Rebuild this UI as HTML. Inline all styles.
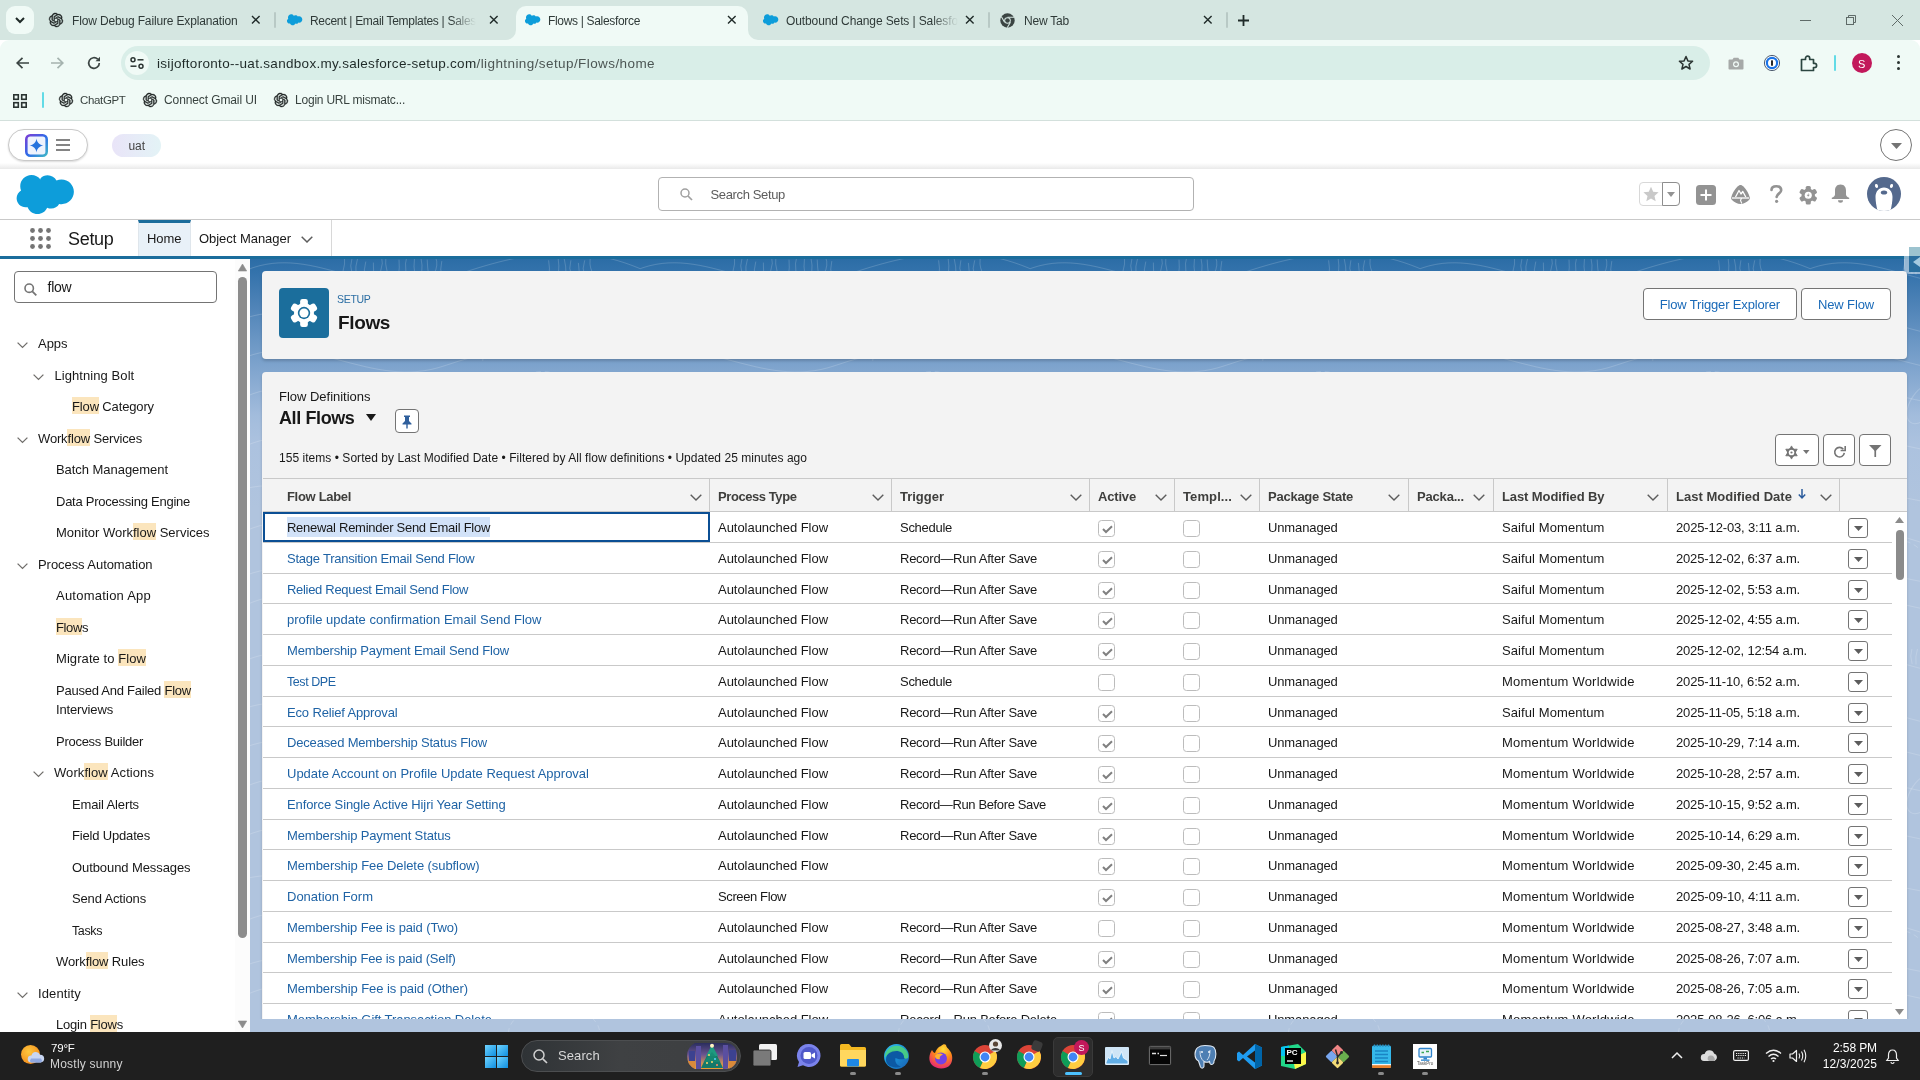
<!DOCTYPE html><html><head><meta charset="utf-8"><title>Flows | Salesforce</title><style>
*{box-sizing:border-box;margin:0;padding:0}
html,body{width:1920px;height:1080px;overflow:hidden;background:#fff}
#root{position:absolute;left:0;top:0;width:1920px;height:1080px;will-change:transform}
body{font-family:"Liberation Sans",sans-serif;font-size:13px;color:#181818;position:relative}
.abs{position:absolute}
.t{position:absolute;white-space:nowrap}
svg{position:absolute;overflow:visible}
#tabstrip{left:0;top:0;width:1920px;height:40px;background:#d5e6e1}
#toolbar{left:0;top:40px;width:1920px;height:80px;background:#f0faf6;border-radius:9px 9px 0 0}
#chromeline{left:0;top:120px;width:1920px;height:1px;background:#d3e0dc}
#urlpill{left:121px;top:46px;width:1589px;height:34px;border-radius:17px;background:#d9eee8}
#activetab{left:516px;top:6px;width:232px;height:34px;background:#f0faf6;border-radius:10px 10px 0 0}
#sfbar1{left:0;top:121px;width:1920px;height:48px;background:linear-gradient(#fff 0,#fff 42px,#ebebeb 47.500px,#fff 48px)}
#sfhdr{left:0;top:169px;width:1920px;height:51px;background:#fff;border-bottom:1px solid #c9c9c9}
#sfnav{left:0;top:220px;width:1920px;height:39px;background:#fff;border-bottom:3px solid #1b6d9c}
#side{left:0;top:259px;width:250px;height:773px;background:#fff}
#main{left:250px;top:259px;width:1670px;height:773px;background:linear-gradient(#2c6da6 0,#3473ac 14px,#4a80b5 41px,#6a96c4 81px,#82a6cf 113px,#a2bcdc 156px,#acc2df 185px,#b0c4de 250px)}
.card{background:#f3f3f3;border-radius:4px;box-shadow:0 2px 3px rgba(0,0,0,.18)}
#taskbar{left:0;top:1032px;width:1920px;height:48px;background:#1f1f1f}
.hl{background:#fbe5bd;padding-top:2px}
.btn{position:absolute;background:#fff;border:1px solid #747474;border-radius:4px}
.cb{position:absolute;width:17px;height:17px;background:#fff;border:1px solid #bcbcbc;border-radius:3.500px}
.rowbtn{position:absolute;width:20px;height:20px;background:#fff;border:1px solid #747474;border-radius:3px}
</style></head><body><div id="root">
<div class="abs" id="tabstrip"></div>
<div class="abs" id="toolbar"></div>
<div class="abs" id="activetab"></div>
<svg style="left:506px;top:30px;" width="10" height="10" viewBox="0 0 10 10"><path d="M10 0 V10 H0 A10 10 0 0 0 10 0Z" fill="#f0faf6"/></svg>
<svg style="left:748px;top:30px;" width="10" height="10" viewBox="0 0 10 10"><path d="M0 0 V10 H10 A10 10 0 0 1 0 0Z" fill="#f0faf6"/></svg>
<div class="abs" id="urlpill"></div>
<div class="abs" id="chromeline"></div>
<div class="abs" style="left:6px;top:6px;width:28px;height:28px;background:#f0faf6;border-radius:9px"></div>
<svg style="left:14px;top:16px;" width="12" height="8" viewBox="0 0 12 8"><path d="M2 2 L6 6 L10 2" fill="none" stroke="#1f2a28" stroke-width="2"/></svg>
<svg style="left:49px;top:13px;" width="14" height="14" viewBox="0 0 24 24"><path d="M22.2819 9.8211a5.9847 5.9847 0 0 0-.5157-4.9108 6.0462 6.0462 0 0 0-6.5098-2.9A6.0651 6.0651 0 0 0 4.9807 4.1818a5.9847 5.9847 0 0 0-3.9977 2.9 6.0462 6.0462 0 0 0 .7427 7.0966 5.98 5.98 0 0 0 .511 4.9107 6.051 6.051 0 0 0 6.5146 2.9001A5.9847 5.9847 0 0 0 13.2599 24a6.0557 6.0557 0 0 0 5.7718-4.2058 5.9894 5.9894 0 0 0 3.9977-2.9001 6.0557 6.0557 0 0 0-.7475-7.0729zm-9.022 12.6081a4.4755 4.4755 0 0 1-2.8764-1.0408l.1419-.0804 4.7783-2.7582a.7948.7948 0 0 0 .3927-.6813v-6.7369l2.02 1.1686a.071.071 0 0 1 .038.052v5.5826a4.504 4.504 0 0 1-4.4945 4.4944zm-9.6607-4.1254a4.4708 4.4708 0 0 1-.5346-3.0137l.142.0852 4.783 2.7582a.7712.7712 0 0 0 .7806 0l5.8428-3.3685v2.3324a.0804.0804 0 0 1-.0332.0615L9.74 19.9502a4.4992 4.4992 0 0 1-6.1408-1.6464zM2.3408 7.8956a4.485 4.485 0 0 1 2.3655-1.9728V11.6a.7664.7664 0 0 0 .3879.6765l5.8144 3.3543-2.0201 1.1685a.0757.0757 0 0 1-.071 0l-4.8303-2.7865A4.504 4.504 0 0 1 2.3408 7.872zm16.5963 3.8558L13.1038 8.364 15.1192 7.2a.0757.0757 0 0 1 .071 0l4.8303 2.7913a4.4944 4.4944 0 0 1-.6765 8.1042v-5.6772a.79.79 0 0 0-.407-.667zm2.0107-3.0231l-.142-.0852-4.7735-2.7818a.7759.7759 0 0 0-.7854 0L9.409 9.2297V6.8974a.0662.0662 0 0 1 .0284-.0615l4.8303-2.7866a4.4992 4.4992 0 0 1 6.6802 4.66zM8.3065 12.863l-2.02-1.1638a.0804.0804 0 0 1-.038-.0567V6.0742a4.4992 4.4992 0 0 1 7.3757-3.4537l-.142.0805L8.704 5.459a.7948.7948 0 0 0-.3927.6813zm1.0976-2.3654l2.602-1.4998 2.6069 1.4998v2.9994l-2.5974 1.4997-2.6067-1.4997Z" fill="#1d2322" stroke="#1d2322" stroke-width=".7"/></svg>
<div class="t" id="t1" style="top:14.0px;font-size:12px;line-height:14px;color:#2f3a38;left:72px;letter-spacing:-0.153px;">Flow Debug Failure Explanation</div>
<svg style="left:252.3px;top:16.1px;" width="7.6" height="7.6" viewBox="0 0 7.6 7.6"><path d="M0 0 L7.6 7.6 M7.6 0 L0 7.6" stroke="#1f2a28" stroke-width="1.4" fill="none"/></svg>
<div class="abs" style="left:273.7px;top:12px;width:2px;height:16px;background:#b8c9c5;border-radius:1px"></div>
<svg style="left:286px;top:14px;" width="16" height="11" viewBox="0 0 16 11"><path d="M6.7 1.6 C7.4 .8 8.4 .3 9.5 .3 c1.5 0 2.8 .8 3.5 2 .6-.3 1.2-.4 1.900-.4 2.600 0 4.700 2.100 4.700 4.700 s-2.100 4.700-4.700 4.700 c-.3 0-.6 0-.9-.1 -.6 1.100-1.800 1.800-3.100 1.800 -.6 0-1.100-.1-1.600-.4 C8.700 14.100 7.200 15.200 5.500 15.200 c-1.800 0-3.400-1.200-4-2.800 -.3.1-.5.1-.8.1 C-1.300 12.500-3 10.800-3 8.700 c0-1.400.8-2.700 1.900-3.300 -.2-.6-.4-1.200-.4-1.900 C-1.500 1 .6-1.100 3.200-1.100 c1.500 0 2.800.7 3.700 1.800z" transform="translate(3 1) scale(.68)" fill="#0d9dda"/></svg>
<div class="t" id="t2" style="top:14.0px;font-size:12px;line-height:14px;color:#2f3a38;left:310px;letter-spacing:-0.295px;-webkit-mask-image:linear-gradient(90deg,#000 85%,transparent);mask-image:linear-gradient(90deg,#000 85%,transparent);">Recent | Email Templates | Sales</div>
<svg style="left:490.3px;top:16.1px;" width="7.6" height="7.6" viewBox="0 0 7.6 7.6"><path d="M0 0 L7.6 7.6 M7.6 0 L0 7.6" stroke="#1f2a28" stroke-width="1.4" fill="none"/></svg>
<svg style="left:524px;top:14px;" width="16" height="11" viewBox="0 0 16 11"><path d="M6.7 1.6 C7.4 .8 8.4 .3 9.5 .3 c1.5 0 2.8 .8 3.5 2 .6-.3 1.2-.4 1.900-.4 2.600 0 4.700 2.100 4.700 4.700 s-2.100 4.700-4.700 4.700 c-.3 0-.6 0-.9-.1 -.6 1.100-1.800 1.800-3.100 1.800 -.6 0-1.100-.1-1.600-.4 C8.700 14.100 7.200 15.200 5.500 15.200 c-1.800 0-3.400-1.200-4-2.800 -.3.1-.5.1-.8.1 C-1.300 12.500-3 10.800-3 8.700 c0-1.400.8-2.700 1.900-3.300 -.2-.6-.4-1.200-.4-1.900 C-1.500 1 .6-1.100 3.200-1.100 c1.500 0 2.800.7 3.700 1.800z" transform="translate(3 1) scale(.68)" fill="#0d9dda"/></svg>
<div class="t" id="t3" style="top:14.0px;font-size:12px;line-height:14px;color:#2f3a38;left:548px;letter-spacing:-0.324px;">Flows | Salesforce</div>
<svg style="left:728.3px;top:16.1px;" width="7.6" height="7.6" viewBox="0 0 7.6 7.6"><path d="M0 0 L7.6 7.6 M7.6 0 L0 7.6" stroke="#1f2a28" stroke-width="1.4" fill="none"/></svg>
<svg style="left:762px;top:14px;" width="16" height="11" viewBox="0 0 16 11"><path d="M6.7 1.6 C7.4 .8 8.4 .3 9.5 .3 c1.5 0 2.8 .8 3.5 2 .6-.3 1.2-.4 1.900-.4 2.600 0 4.700 2.100 4.700 4.700 s-2.100 4.700-4.700 4.700 c-.3 0-.6 0-.9-.1 -.6 1.100-1.800 1.800-3.100 1.800 -.6 0-1.100-.1-1.600-.4 C8.700 14.100 7.200 15.200 5.500 15.200 c-1.800 0-3.400-1.200-4-2.800 -.3.1-.5.1-.8.1 C-1.300 12.500-3 10.800-3 8.700 c0-1.400.8-2.700 1.900-3.300 -.2-.6-.4-1.200-.4-1.900 C-1.500 1 .6-1.100 3.200-1.100 c1.500 0 2.800.7 3.700 1.800z" transform="translate(3 1) scale(.68)" fill="#0d9dda"/></svg>
<div class="t" id="t4" style="top:14.0px;font-size:12px;line-height:14px;color:#2f3a38;left:786px;letter-spacing:-0.108px;-webkit-mask-image:linear-gradient(90deg,#000 85%,transparent);mask-image:linear-gradient(90deg,#000 85%,transparent);">Outbound Change Sets | Salesfo</div>
<svg style="left:966.3px;top:16.1px;" width="7.6" height="7.6" viewBox="0 0 7.6 7.6"><path d="M0 0 L7.6 7.6 M7.6 0 L0 7.6" stroke="#1f2a28" stroke-width="1.4" fill="none"/></svg>
<div class="abs" style="left:987.5px;top:12px;width:2px;height:16px;background:#b8c9c5;border-radius:1px"></div>
<svg style="left:1000px;top:13px;" width="15" height="15" viewBox="0 0 15 15"><circle cx="7.5" cy="7.5" r="7.2" fill="#3b4543"/><circle cx="7.500" cy="7.500" r="3.300" fill="#d5e6e1"/><circle cx="7.500" cy="7.500" r="2.300" fill="#3b4543"/><path d="M7.500 4.200 H14 M4.600 9.200 L1.400 3.700 M10.400 9.200 L7.200 14.700" stroke="#d5e6e1" stroke-width="1.100"/></svg>
<div class="t" id="t5" style="top:14.0px;font-size:12px;line-height:14px;color:#2f3a38;left:1024px;letter-spacing:-0.212px;">New Tab</div>
<svg style="left:1204.3px;top:16.1px;" width="7.6" height="7.6" viewBox="0 0 7.6 7.6"><path d="M0 0 L7.6 7.6 M7.6 0 L0 7.6" stroke="#1f2a28" stroke-width="1.4" fill="none"/></svg>
<div class="abs" style="left:1225.9px;top:12px;width:2px;height:16px;background:#b8c9c5;border-radius:1px"></div>
<svg style="left:1238px;top:14.5px;" width="11" height="11" viewBox="0 0 11 11"><path d="M5.500 0 V11 M0 5.500 H11" stroke="#1f2a28" stroke-width="1.800"/></svg>
<svg style="left:1800px;top:19.5px;" width="11" height="1" viewBox="0 0 11 1"><rect width="11" height="1" fill="#5f6b68"/></svg>
<svg style="left:1846px;top:15px;" width="10" height="10" viewBox="0 0 10 10"><rect x=".5" y="2.500" width="7" height="7" fill="none" stroke="#5f6b68"/><path d="M2.500 2.500 V.5 H9.500 V7.500 H7.500" fill="none" stroke="#5f6b68"/></svg>
<svg style="left:1892px;top:14.5px;" width="11" height="11" viewBox="0 0 11 11"><path d="M0 0 L11 11 M11 0 L0 11" stroke="#5f6b68" stroke-width="1"/></svg>
<svg style="left:16px;top:57px;" width="13" height="12" viewBox="0 0 13 12"><path d="M6.500 .8 L1.200 6 L6.500 11.200 M1.200 6 H13" fill="none" stroke="#3b4543" stroke-width="1.700"/></svg>
<svg style="left:51px;top:57px;" width="13" height="12" viewBox="0 0 13 12"><path d="M6.500 .8 L11.800 6 L6.500 11.200 M11.800 6 H0" fill="none" stroke="#a5b3af" stroke-width="1.700"/></svg>
<svg style="left:87px;top:56px;" width="14" height="14" viewBox="0 0 14 14"><path d="M12.300 7 A5.300 5.300 0 1 1 10.700 3.200" fill="none" stroke="#3b4543" stroke-width="1.700"/><path d="M13 .8 V5.300 H8.500 Z" fill="#3b4543"/></svg>
<div class="abs" style="left:125px;top:51px;width:24px;height:24px;background:#f0faf6;border-radius:12px"></div>
<svg style="left:130px;top:57px;" width="14" height="12" viewBox="0 0 14 12"><circle cx="3" cy="2.800" r="2" fill="none" stroke="#2b3432" stroke-width="1.500"/><path d="M7.500 2.800 H13.500" stroke="#2b3432" stroke-width="1.500"/><circle cx="11" cy="9.200" r="2" fill="none" stroke="#2b3432" stroke-width="1.500"/><path d="M.5 9.200 H6.500" stroke="#2b3432" stroke-width="1.500"/></svg>
<div class="t" id="t6" style="top:56.0px;font-size:13.5px;line-height:15px;color:#1f2a28;left:157px;letter-spacing:0.302px;">isijoftoronto--uat.sandbox.my.salesforce-setup.com</div>
<div class="t" id="t7" style="top:56.0px;font-size:13.5px;line-height:15px;color:#4c5654;left:476.5px;letter-spacing:0.413px;">/lightning/setup/Flows/home</div>
<svg style="left:1678px;top:55px;" width="16" height="16" viewBox="0 0 16 16"><path d="M8 1.500 L9.900 5.900 L14.600 6.300 L11 9.400 L12.100 14 L8 11.500 L3.900 14 L5 9.400 L1.400 6.300 L6.100 5.900 Z" fill="none" stroke="#2b3432" stroke-width="1.500" stroke-linejoin="round"/></svg>
<svg style="left:1728px;top:57px;" width="16" height="13" viewBox="0 0 16 13"><path d="M1.500 2.500 H4.500 L5.700 .8 H10.300 L11.500 2.500 H14.500 Q15.500 2.500 15.500 3.500 V11.500 Q15.500 12.500 14.500 12.500 H1.500 Q.5 12.500 .5 11.500 V3.500 Q.5 2.500 1.500 2.500Z" fill="#a6a9a8"/><circle cx="8" cy="7.300" r="3" fill="#f0faf6"/><circle cx="8" cy="7.300" r="1.700" fill="#a6a9a8"/></svg>
<svg style="left:1764px;top:55px;" width="16" height="16" viewBox="0 0 16 16"><circle cx="8" cy="8" r="7.600" fill="#fff" stroke="#26344d" stroke-width=".8"/><circle cx="8" cy="8" r="6.200" fill="#1a73e8"/><circle cx="8" cy="8" r="4" fill="#fff"/><rect x="7.100" y="5.200" width="1.800" height="5.600" rx=".5" fill="#111"/></svg>
<svg style="left:1799px;top:54px;" width="18" height="18" viewBox="0 0 18 18"><path d="M2.500 5.500 H6.500 V4.300 a2.100 2.100 0 1 1 4.200 0 V5.500 H14.500 V9.300 H15.500 a2.100 2.100 0 1 1 0 4.200 H14.500 V16.500 H2.500 Z" fill="none" stroke="#2b4540" stroke-width="1.700" stroke-linejoin="round"/></svg>
<div class="abs" style="left:1834px;top:55px;width:2px;height:16px;background:#62dbe6;border-radius:1px"></div>
<div class="abs" style="left:1852px;top:53px;width:20px;height:20px;background:#c2185b;border-radius:10px"></div>
<div class="t" id="t8" style="top:55.7px;font-size:11px;line-height:16px;color:#fff;left:1858px;">S</div>
<svg style="left:1896.5px;top:55px;" width="3" height="15" viewBox="0 0 3 15"><circle cx="1.500" cy="1.500" r="1.500" fill="#2b3432"/><circle cx="1.500" cy="7.500" r="1.500" fill="#2b3432"/><circle cx="1.500" cy="13.500" r="1.500" fill="#2b3432"/></svg>
<svg style="left:13px;top:94px;" width="14" height="14" viewBox="0 0 14 14"><g fill="none" stroke="#2b3432" stroke-width="1.600"><rect x=".8" y=".8" width="4.500" height="4.500"/><rect x="8.700" y=".8" width="4.500" height="4.500"/><rect x=".8" y="8.700" width="4.500" height="4.500"/><rect x="8.700" y="8.700" width="4.500" height="4.500"/></g></svg>
<div class="abs" style="left:42px;top:92px;width:2px;height:16px;background:#62dbe6;border-radius:1px"></div>
<svg style="left:59px;top:93px;" width="14" height="14" viewBox="0 0 24 24"><path d="M22.2819 9.8211a5.9847 5.9847 0 0 0-.5157-4.9108 6.0462 6.0462 0 0 0-6.5098-2.9A6.0651 6.0651 0 0 0 4.9807 4.1818a5.9847 5.9847 0 0 0-3.9977 2.9 6.0462 6.0462 0 0 0 .7427 7.0966 5.98 5.98 0 0 0 .511 4.9107 6.051 6.051 0 0 0 6.5146 2.9001A5.9847 5.9847 0 0 0 13.2599 24a6.0557 6.0557 0 0 0 5.7718-4.2058 5.9894 5.9894 0 0 0 3.9977-2.9001 6.0557 6.0557 0 0 0-.7475-7.0729zm-9.022 12.6081a4.4755 4.4755 0 0 1-2.8764-1.0408l.1419-.0804 4.7783-2.7582a.7948.7948 0 0 0 .3927-.6813v-6.7369l2.02 1.1686a.071.071 0 0 1 .038.052v5.5826a4.504 4.504 0 0 1-4.4945 4.4944zm-9.6607-4.1254a4.4708 4.4708 0 0 1-.5346-3.0137l.142.0852 4.783 2.7582a.7712.7712 0 0 0 .7806 0l5.8428-3.3685v2.3324a.0804.0804 0 0 1-.0332.0615L9.74 19.9502a4.4992 4.4992 0 0 1-6.1408-1.6464zM2.3408 7.8956a4.485 4.485 0 0 1 2.3655-1.9728V11.6a.7664.7664 0 0 0 .3879.6765l5.8144 3.3543-2.0201 1.1685a.0757.0757 0 0 1-.071 0l-4.8303-2.7865A4.504 4.504 0 0 1 2.3408 7.872zm16.5963 3.8558L13.1038 8.364 15.1192 7.2a.0757.0757 0 0 1 .071 0l4.8303 2.7913a4.4944 4.4944 0 0 1-.6765 8.1042v-5.6772a.79.79 0 0 0-.407-.667zm2.0107-3.0231l-.142-.0852-4.7735-2.7818a.7759.7759 0 0 0-.7854 0L9.409 9.2297V6.8974a.0662.0662 0 0 1 .0284-.0615l4.8303-2.7866a4.4992 4.4992 0 0 1 6.6802 4.66zM8.3065 12.863l-2.02-1.1638a.0804.0804 0 0 1-.038-.0567V6.0742a4.4992 4.4992 0 0 1 7.3757-3.4537l-.142.0805L8.704 5.459a.7948.7948 0 0 0-.3927.6813zm1.0976-2.3654l2.602-1.4998 2.6069 1.4998v2.9994l-2.5974 1.4997-2.6067-1.4997Z" fill="#1d2322" stroke="#1d2322" stroke-width=".7"/></svg>
<div class="t" id="t9" style="top:94.0px;font-size:11.5px;line-height:12px;color:#38423f;left:80px;letter-spacing:-0.348px;">ChatGPT</div>
<svg style="left:143px;top:93px;" width="14" height="14" viewBox="0 0 24 24"><path d="M22.2819 9.8211a5.9847 5.9847 0 0 0-.5157-4.9108 6.0462 6.0462 0 0 0-6.5098-2.9A6.0651 6.0651 0 0 0 4.9807 4.1818a5.9847 5.9847 0 0 0-3.9977 2.9 6.0462 6.0462 0 0 0 .7427 7.0966 5.98 5.98 0 0 0 .511 4.9107 6.051 6.051 0 0 0 6.5146 2.9001A5.9847 5.9847 0 0 0 13.2599 24a6.0557 6.0557 0 0 0 5.7718-4.2058 5.9894 5.9894 0 0 0 3.9977-2.9001 6.0557 6.0557 0 0 0-.7475-7.0729zm-9.022 12.6081a4.4755 4.4755 0 0 1-2.8764-1.0408l.1419-.0804 4.7783-2.7582a.7948.7948 0 0 0 .3927-.6813v-6.7369l2.02 1.1686a.071.071 0 0 1 .038.052v5.5826a4.504 4.504 0 0 1-4.4945 4.4944zm-9.6607-4.1254a4.4708 4.4708 0 0 1-.5346-3.0137l.142.0852 4.783 2.7582a.7712.7712 0 0 0 .7806 0l5.8428-3.3685v2.3324a.0804.0804 0 0 1-.0332.0615L9.74 19.9502a4.4992 4.4992 0 0 1-6.1408-1.6464zM2.3408 7.8956a4.485 4.485 0 0 1 2.3655-1.9728V11.6a.7664.7664 0 0 0 .3879.6765l5.8144 3.3543-2.0201 1.1685a.0757.0757 0 0 1-.071 0l-4.8303-2.7865A4.504 4.504 0 0 1 2.3408 7.872zm16.5963 3.8558L13.1038 8.364 15.1192 7.2a.0757.0757 0 0 1 .071 0l4.8303 2.7913a4.4944 4.4944 0 0 1-.6765 8.1042v-5.6772a.79.79 0 0 0-.407-.667zm2.0107-3.0231l-.142-.0852-4.7735-2.7818a.7759.7759 0 0 0-.7854 0L9.409 9.2297V6.8974a.0662.0662 0 0 1 .0284-.0615l4.8303-2.7866a4.4992 4.4992 0 0 1 6.6802 4.66zM8.3065 12.863l-2.02-1.1638a.0804.0804 0 0 1-.038-.0567V6.0742a4.4992 4.4992 0 0 1 7.3757-3.4537l-.142.0805L8.704 5.459a.7948.7948 0 0 0-.3927.6813zm1.0976-2.3654l2.602-1.4998 2.6069 1.4998v2.9994l-2.5974 1.4997-2.6067-1.4997Z" fill="#1d2322" stroke="#1d2322" stroke-width=".7"/></svg>
<div class="t" id="t10" style="top:93.0px;font-size:12px;line-height:14px;color:#38423f;left:164px;letter-spacing:-0.106px;">Connect Gmail UI</div>
<svg style="left:274px;top:93px;" width="14" height="14" viewBox="0 0 24 24"><path d="M22.2819 9.8211a5.9847 5.9847 0 0 0-.5157-4.9108 6.0462 6.0462 0 0 0-6.5098-2.9A6.0651 6.0651 0 0 0 4.9807 4.1818a5.9847 5.9847 0 0 0-3.9977 2.9 6.0462 6.0462 0 0 0 .7427 7.0966 5.98 5.98 0 0 0 .511 4.9107 6.051 6.051 0 0 0 6.5146 2.9001A5.9847 5.9847 0 0 0 13.2599 24a6.0557 6.0557 0 0 0 5.7718-4.2058 5.9894 5.9894 0 0 0 3.9977-2.9001 6.0557 6.0557 0 0 0-.7475-7.0729zm-9.022 12.6081a4.4755 4.4755 0 0 1-2.8764-1.0408l.1419-.0804 4.7783-2.7582a.7948.7948 0 0 0 .3927-.6813v-6.7369l2.02 1.1686a.071.071 0 0 1 .038.052v5.5826a4.504 4.504 0 0 1-4.4945 4.4944zm-9.6607-4.1254a4.4708 4.4708 0 0 1-.5346-3.0137l.142.0852 4.783 2.7582a.7712.7712 0 0 0 .7806 0l5.8428-3.3685v2.3324a.0804.0804 0 0 1-.0332.0615L9.74 19.9502a4.4992 4.4992 0 0 1-6.1408-1.6464zM2.3408 7.8956a4.485 4.485 0 0 1 2.3655-1.9728V11.6a.7664.7664 0 0 0 .3879.6765l5.8144 3.3543-2.0201 1.1685a.0757.0757 0 0 1-.071 0l-4.8303-2.7865A4.504 4.504 0 0 1 2.3408 7.872zm16.5963 3.8558L13.1038 8.364 15.1192 7.2a.0757.0757 0 0 1 .071 0l4.8303 2.7913a4.4944 4.4944 0 0 1-.6765 8.1042v-5.6772a.79.79 0 0 0-.407-.667zm2.0107-3.0231l-.142-.0852-4.7735-2.7818a.7759.7759 0 0 0-.7854 0L9.409 9.2297V6.8974a.0662.0662 0 0 1 .0284-.0615l4.8303-2.7866a4.4992 4.4992 0 0 1 6.6802 4.66zM8.3065 12.863l-2.02-1.1638a.0804.0804 0 0 1-.038-.0567V6.0742a4.4992 4.4992 0 0 1 7.3757-3.4537l-.142.0805L8.704 5.459a.7948.7948 0 0 0-.3927.6813zm1.0976-2.3654l2.602-1.4998 2.6069 1.4998v2.9994l-2.5974 1.4997-2.6067-1.4997Z" fill="#1d2322" stroke="#1d2322" stroke-width=".7"/></svg>
<div class="t" id="t11" style="top:93.0px;font-size:12px;line-height:14px;color:#38423f;left:295px;letter-spacing:-0.213px;">Login URL mismatc...</div>
<div class="abs" id="sfhdr"></div>
<div class="abs" id="sfbar1"></div>
<div class="abs" id="sfnav"></div>
<div class="abs" style="left:8px;top:129px;width:80px;height:32px;background:#fff;border:1px solid #c9c9c9;border-radius:16px;box-shadow:0 1px 2px rgba(0,0,0,.15)"></div>
<svg style="left:25px;top:133.5px;" width="23" height="23" viewBox="0 0 23 23"><defs><linearGradient id="ag" x1="0" y1="0" x2="1" y2="1"><stop offset="0" stop-color="#7a3fd6"/><stop offset=".5" stop-color="#2f6be8"/><stop offset="1" stop-color="#3fb5c8"/></linearGradient></defs><rect x="1.300" y="1.300" width="20.400" height="20.400" rx="4" fill="#eef3fd" stroke="url(#ag)" stroke-width="2.600"/><path d="M11.500 4.500 C12 8.500 14.500 11 18.500 11.500 C14.500 12 12 14.500 11.500 18.500 C11 14.500 8.500 12 4.500 11.500 C8.500 11 11 8.500 11.500 4.500Z" fill="#2673dd"/></svg>
<svg style="left:56px;top:139px;" width="14" height="12" viewBox="0 0 14 12"><path d="M0 1 H14 M0 6 H14 M0 11 H14" stroke="#5c5c5c" stroke-width="1.700"/></svg>
<div class="abs" style="left:112px;top:134px;width:49px;height:23px;background:linear-gradient(90deg,#e9e4f8,#e3f3f6);border-radius:11.500px"></div>
<div class="t" id="t12" style="top:139.0px;font-size:12px;line-height:14px;color:#444;left:128.5px;letter-spacing:-0.062px;">uat</div>
<div class="abs" style="left:1880px;top:129px;width:32px;height:32px;border:1px solid #747474;border-radius:16px;background:#fff"></div>
<svg style="left:1890.5px;top:142.5px;" width="11" height="6" viewBox="0 0 11 6"><path d="M0 0 H11 L5.500 6Z" fill="#747474"/></svg>
<svg style="left:15.5px;top:173.5px;" width="58.5" height="41.2" viewBox="0 0 57 41"><path d="M23.700 4.400 c1.800-1.900 4.400-3.100 7.200-3.100 3.800 0 7 2.100 8.800 5.200 1.500-.7 3.200-1.100 5-1.100 6.800 0 12.300 5.500 12.300 12.300 S51.500 30 44.700 30 c-.8 0-1.600-.1-2.400-.2 -1.500 2.800-4.500 4.600-7.900 4.600 -1.400 0-2.800-.3-4-.9 -1.600 3.700-5.300 6.300-9.600 6.300 -4.500 0-8.300-2.800-9.800-6.800 -.6.100-1.300.2-2 .2 C4 33.200 0 29.200 0 24.200 c0-3.300 1.800-6.200 4.400-7.800 -.5-1.300-.8-2.700-.8-4.200 C3.600 6.100 8.600 1.100 14.700 1.100 c3.700 0 6.900 1.700 9 4.300z" fill="#0d9dda"/></svg>
<div class="abs" style="left:658px;top:177px;width:536px;height:34px;background:#fff;border:1px solid #b2b2b2;border-radius:4px"></div>
<svg style="left:679.5px;top:187.5px;" width="13" height="13" viewBox="0 0 13 13"><circle cx="5" cy="5" r="4" fill="none" stroke="#a0a0a0" stroke-width="1.500"/><path d="M8 8 L12 12" stroke="#a0a0a0" stroke-width="1.700"/></svg>
<div class="t" id="t13" style="top:187.0px;font-size:13.0px;line-height:15px;color:#5c5c5c;left:710.5px;letter-spacing:-0.357px;">Search Setup</div>
<div class="abs" style="left:1639px;top:182px;width:41px;height:24px;background:#fff;border:1px solid #d8d8d8;border-radius:4px"></div>
<div class="abs" style="left:1662px;top:182px;width:18px;height:24px;background:#fff;border:1px solid #8e8e8e;border-radius:0 4px 4px 0"></div>
<svg style="left:1643px;top:186px;" width="16" height="16" viewBox="0 0 16 16"><path d="M8 .8 L10.200 5.800 L15.600 6.300 L11.500 9.900 L12.700 15.200 L8 12.400 L3.300 15.200 L4.500 9.900 L.4 6.300 L5.800 5.800 Z" fill="#c9c9c9"/></svg>
<svg style="left:1667px;top:192px;" width="8" height="5" viewBox="0 0 8 5"><path d="M0 0 H8 L4 5Z" fill="#939393"/></svg>
<svg style="left:1696px;top:185px;" width="20" height="20" viewBox="0 0 20 20"><rect width="20" height="20" rx="3.500" fill="#939393"/><path d="M10 4.500 V15.500 M4.500 10 H15.500" stroke="#fff" stroke-width="2"/></svg>
<svg style="left:1731px;top:185px;" width="19" height="19" viewBox="0 0 19 19"><path d="M9.500 0 C10.500 0 11.500 .6 12.500 1.600 C15.500 4.500 18 9 18.800 12.500 C19 13.500 18.700 14.300 18 15 C16 17 12.500 19 9.500 19 C6.500 19 3 17 1 15 C.3 14.300 0 13.500 .2 12.500 C1 9 3.500 4.500 6.500 1.600 C7.500 .6 8.500 0 9.500 0Z" fill="#939393"/><path d="M4.500 12 L8 5.500 L10 9 L11.800 6.500 L14.800 12" fill="none" stroke="#fff" stroke-width="1.300" stroke-linejoin="round"/><path d="M1 13 H18" stroke="#fff" stroke-width="1.300"/><path d="M10.500 13 L9.500 15.500 L10.800 18.500" stroke="#fff" stroke-width="1.100" fill="none"/></svg>
<svg style="left:1769.5px;top:185px;" width="13" height="18" viewBox="0 0 13 18"><path d="M1.500 5 C1.500 2.500 3.500 1.200 6.300 1.200 C9.200 1.200 11.200 2.800 11.200 5.200 C11.200 8.200 7 8.500 6.600 12" fill="none" stroke="#939393" stroke-width="2.600" stroke-linecap="round"/><circle cx="6.600" cy="16.300" r="1.600" fill="#939393"/></svg>
<svg style="left:1798.5px;top:185.5px;" width="18.5" height="18.5" viewBox="0 0 24 24"><g transform="translate(12 12)"><rect x="-3.300" y="-12" width="6.600" height="7" rx="2" fill="#939393" transform="rotate(0)"/><rect x="-3.300" y="-12" width="6.600" height="7" rx="2" fill="#939393" transform="rotate(60)"/><rect x="-3.300" y="-12" width="6.600" height="7" rx="2" fill="#939393" transform="rotate(120)"/><rect x="-3.300" y="-12" width="6.600" height="7" rx="2" fill="#939393" transform="rotate(180)"/><rect x="-3.300" y="-12" width="6.600" height="7" rx="2" fill="#939393" transform="rotate(240)"/><rect x="-3.300" y="-12" width="6.600" height="7" rx="2" fill="#939393" transform="rotate(300)"/><circle r="8.600" fill="#939393"/><circle r="4.6" fill="#fff"/><path d="M1.200 -3.200 L-2 .8 H0 L-1.200 3.200 L2 -.8 H0Z" fill="#939393"/></g></svg>
<svg style="left:1830.5px;top:183.8px;" width="19" height="19.5" viewBox="0 0 19 19.5"><path d="M9.500 .5 C5.500 .5 4 3.500 4 6.500 V10.500 C4 12 2.500 13 .8 13.800 V15 H18.200 V13.800 C16.500 13 15 12 15 10.500 V6.500 C15 3.500 13.500 .5 9.500 .5Z" fill="#939393"/><path d="M7 16.300 a2.500 2.500 0 0 0 5 0Z" fill="#939393"/></svg>
<svg style="left:1867px;top:177px;" width="34" height="34" viewBox="0 0 34 34"><defs><clipPath id="avc"><circle cx="17" cy="17" r="17"/></clipPath></defs><circle cx="17" cy="17" r="17" fill="#54698d"/><g clip-path="url(#avc)"><ellipse cx="9.500" cy="9" rx="1.500" ry="2" fill="#fff" transform="rotate(-20 9.500 9)"/><ellipse cx="24.500" cy="9" rx="1.500" ry="2" fill="#fff" transform="rotate(20 24.500 9)"/><path d="M17 10.500 C22 10.500 25.500 14.500 25.500 20 C25.500 25 24.500 29 23.500 34 H10.500 C9.500 29 8.500 25 8.500 20 C8.500 14.500 12 10.500 17 10.500Z" fill="#fff"/><ellipse cx="17" cy="15.500" rx="3.200" ry="2.100" fill="#54698d"/></g></svg>
<svg style="left:30px;top:227.5px;" width="21" height="21" viewBox="0 0 21 21"><circle cx="2.5" cy="2.5" r="2.400" fill="#747474"/><circle cx="10.5" cy="2.5" r="2.400" fill="#747474"/><circle cx="18.5" cy="2.5" r="2.400" fill="#747474"/><circle cx="2.5" cy="10.5" r="2.400" fill="#747474"/><circle cx="10.5" cy="10.5" r="2.400" fill="#747474"/><circle cx="18.5" cy="10.5" r="2.400" fill="#747474"/><circle cx="2.5" cy="18.5" r="2.400" fill="#747474"/><circle cx="10.5" cy="18.5" r="2.400" fill="#747474"/><circle cx="18.5" cy="18.5" r="2.400" fill="#747474"/></svg>
<div class="t" id="t14" style="top:229.0px;font-size:18px;line-height:20px;color:#181818;left:68px;letter-spacing:-0.309px;">Setup</div>
<div class="abs" style="left:138px;top:220px;width:53px;height:36px;background:#e8f1f8;border-top:3px solid #1b6d9c;border-left:1px solid #dfe6ec;border-right:1px solid #dfe6ec"></div>
<div class="abs" style="left:331px;top:220px;width:1px;height:36px;background:#d8d8d8"></div>
<div class="t" id="t15" style="top:231.0px;font-size:13px;line-height:15px;color:#181818;left:147px;letter-spacing:-0.047px;">Home</div>
<div class="t" id="t16" style="top:231.0px;font-size:13px;line-height:15px;color:#181818;left:199px;letter-spacing:-0.036px;">Object Manager</div>
<svg style="left:301px;top:235.5px;" width="12" height="7" viewBox="0 0 12 7"><path d="M.7 .7 L6 6 L11.300 .7" fill="none" stroke="#5c5c5c" stroke-width="1.500"/></svg>
<div class="abs" id="side"></div>
<div class="abs" id="main"></div>
<svg style="left:250px;top:259px" width="1670" height="773" viewBox="0 0 1670 773"><defs><pattern id="topo" width="390" height="390" patternUnits="userSpaceOnUse"><g fill="none" stroke="#fff" stroke-opacity=".17" stroke-width="1"><path d="M94.5 -2.8 q0.9 8 -1.7 16" /><path d="M102.1 -1.1 q-2.7 8 0.0 16" /><path d="M107.6 -0.5 q-2.6 8 -1.6 16" /><path d="M115.8 2.6 q-2.3 8 -1.1 16" /><path d="M123.4 3.6 q0.5 8 -0.4 16" /><path d="M131.4 -3.6 q2.2 8 -0.8 16" /><path d="M135.9 -3.1 q-1.1 8 1.3 16" /><path d="M149.0 0.7 q0.8 8 -0.5 16" /><path d="M157.1 -3.5 q-2.6 8 -1.2 16" /><path d="M164.5 -0.6 q-1.1 8 0.3 16" /><path d="M170.9 -1.6 q1.8 8 0.8 16" /><path d="M177.2 0.6 q0.2 8 1.5 16" /><path d="M185.7 -1.7 q2.9 8 -1.5 16" /><path d="M191.8 2.1 q-2.1 8 -0.0 16" /><path d="M298.6 1.3 q1.6 8 0.3 16" /><path d="M308.1 -1.5 q1.2 8 0.4 16" /><path d="M314.2 -0.4 q2.0 8 1.8 16" /><path d="M320.9 1.3 q-2.6 8 0.8 16" /><path d="M328.4 3.9 q1.9 8 -0.9 16" /><path d="M334.7 1.3 q-2.9 8 -0.2 16" /><path d="M341.0 -3.1 q-2.6 8 1.1 16" /><path d="M-10 14.1 C60 -21.0 120 46.9 195 20.0 S330 -19.3 400 14.1"/><path d="M-10 61.2 C60 32.2 120 103.9 195 66.3 S330 43.5 400 61.2"/><path d="M-10 100.5 C60 68.8 120 132.6 195 106.6 S330 84.6 400 100.5"/><path d="M-10 140.4 C60 103.9 120 170.1 195 136.1 S330 115.1 400 140.4"/><path d="M-10 189.4 C60 154.7 120 214.5 195 188.1 S330 161.8 400 189.4"/><path d="M-10 231.1 C60 210.1 120 269.9 195 231.3 S330 208.4 400 231.1"/><path d="M-10 274.8 C60 235.9 120 317.8 195 279.3 S330 257.3 400 274.8"/><path d="M-10 318.8 C60 286.6 120 351.7 195 312.4 S330 296.5 400 318.8"/><path d="M-10 349.0 C60 310.3 120 378.2 195 343.6 S330 320.8 400 349.0"/><ellipse cx="47.3" cy="30.1" rx="17.6" ry="9.5" transform="rotate(93 47.3 30.1)"/><ellipse cx="232.5" cy="53.2" rx="19.0" ry="12.4" transform="rotate(162 232.5 53.2)"/><ellipse cx="113.2" cy="144.6" rx="22.7" ry="12.5" transform="rotate(124 113.2 144.6)"/><ellipse cx="357.7" cy="183.8" rx="25.6" ry="13.7" transform="rotate(26 357.7 183.8)"/><ellipse cx="277.4" cy="274.3" rx="25.5" ry="19.8" transform="rotate(132 277.4 274.3)"/><ellipse cx="37.6" cy="343.8" rx="26.7" ry="14.9" transform="rotate(139 37.6 343.8)"/><ellipse cx="331.7" cy="280.2" rx="21.2" ry="16.0" transform="rotate(23 331.7 280.2)"/><path d="M232.7 101.8 a31.0 18.6 0 0 1 62.0 0" stroke-dasharray="5 4"/><path d="M42.5 301.1 a36.0 21.6 0 0 1 72.0 0" stroke-dasharray="5 4"/><path d="M266.0 128.6 a26.7 16.0 0 0 1 53.4 0" stroke-dasharray="5 4"/><path d="M258.5 384.1 a45.6 27.3 0 0 1 91.2 0" stroke-dasharray="5 4"/><path d="M259.9 319.1 a42.2 25.3 0 0 1 84.4 0" stroke-dasharray="5 4"/></g></pattern></defs><rect width="1670" height="773" fill="url(#topo)"/></svg>
<div class="abs" style="left:14px;top:271px;width:203px;height:32px;background:#fff;border:1px solid #747474;border-radius:4px"></div>
<svg style="left:24px;top:283px;" width="13" height="13" viewBox="0 0 13 13"><circle cx="5.200" cy="5.200" r="4.200" fill="none" stroke="#747474" stroke-width="1.600"/><path d="M8.300 8.300 L12.300 12.300" stroke="#747474" stroke-width="1.800"/></svg>
<div class="t" id="t17" style="top:279.0px;font-size:14px;line-height:16px;color:#181818;left:47.5px;letter-spacing:-0.227px;">flow</div>
<div class="abs" style="left:235px;top:259px;width:15px;height:773px;background:#fcfcfc"></div>
<svg style="left:238px;top:264px;" width="9" height="7" viewBox="0 0 9 7"><path d="M.3 7 H8.700 L4.500 0Z" fill="#8c8c8c" stroke="#8c8c8c" stroke-width=".6" stroke-linejoin="round"/></svg>
<div class="abs" style="left:238px;top:277px;width:9px;height:661px;background:#8c8c8c;border-radius:4.500px"></div>
<svg style="left:238px;top:1021px;" width="9" height="7" viewBox="0 0 9 7"><path d="M.3 0 H8.700 L4.500 7Z" fill="#8c8c8c" stroke="#8c8c8c" stroke-width=".6" stroke-linejoin="round"/></svg>
<svg style="left:16.9px;top:341.5px;" width="11" height="6" viewBox="0 0 11 6"><path d="M.6 .6 L5.500 5.400 L10.400 .6" fill="none" stroke="#706e6b" stroke-width="1.300"/></svg>
<div class="t" id="t18" style="top:336.0px;font-size:13px;line-height:15px;color:#181818;left:38px;letter-spacing:-0.035px;">Apps</div>
<svg style="left:32.9px;top:373.5px;" width="11" height="6" viewBox="0 0 11 6"><path d="M.6 .6 L5.500 5.400 L10.400 .6" fill="none" stroke="#706e6b" stroke-width="1.300"/></svg>
<div class="t" id="t19" style="top:368.0px;font-size:13px;line-height:15px;color:#181818;left:54.5px;letter-spacing:0.073px;">Lightning Bolt</div>
<div class="t" id="t20" style="top:399.0px;font-size:13px;line-height:15px;color:#181818;left:72px;letter-spacing:-0.141px;"><span class="hl">Flow</span> Category</div>
<svg style="left:16.9px;top:436.5px;" width="11" height="6" viewBox="0 0 11 6"><path d="M.6 .6 L5.500 5.400 L10.400 .6" fill="none" stroke="#706e6b" stroke-width="1.300"/></svg>
<div class="t" id="t21" style="top:431.0px;font-size:13px;line-height:15px;color:#181818;left:38px;letter-spacing:-0.159px;">Work<span class="hl">flow</span> Services</div>
<div class="t" id="t22" style="top:462.0px;font-size:13px;line-height:15px;color:#181818;left:56px;letter-spacing:-0.046px;">Batch Management</div>
<div class="t" id="t23" style="top:494.0px;font-size:13px;line-height:15px;color:#181818;left:56px;letter-spacing:-0.249px;">Data Processing Engine</div>
<div class="t" id="t24" style="top:525.0px;font-size:13px;line-height:15px;color:#181818;left:56px;letter-spacing:-0.006px;">Monitor Work<span class="hl">flow</span> Services</div>
<svg style="left:16.9px;top:562.5px;" width="11" height="6" viewBox="0 0 11 6"><path d="M.6 .6 L5.500 5.400 L10.400 .6" fill="none" stroke="#706e6b" stroke-width="1.300"/></svg>
<div class="t" id="t25" style="top:557.0px;font-size:13px;line-height:15px;color:#181818;left:38px;letter-spacing:-0.062px;">Process Automation</div>
<div class="t" id="t26" style="top:588.0px;font-size:13px;line-height:15px;color:#181818;left:56px;letter-spacing:0.229px;">Automation App</div>
<div class="t" id="t27" style="top:620.0px;font-size:13.0px;line-height:15px;color:#181818;left:56px;letter-spacing:-0.391px;"><span class="hl">Flow</span>s</div>
<div class="t" id="t28" style="top:651.0px;font-size:13px;line-height:15px;color:#181818;left:56px;letter-spacing:0.075px;">Migrate to <span class="hl">Flow</span></div>
<div class="t" id="t29" style="top:683.0px;font-size:13px;line-height:15px;color:#181818;left:56px;letter-spacing:-0.237px;">Paused And Failed <span class="hl">Flow</span></div>
<div class="t" id="t30" style="top:702.0px;font-size:13px;line-height:15px;color:#181818;left:56px;letter-spacing:-0.153px;">Interviews</div>
<div class="t" id="t31" style="top:734.0px;font-size:13px;line-height:15px;color:#181818;left:56px;letter-spacing:-0.270px;">Process Builder</div>
<svg style="left:32.9px;top:770.5px;" width="11" height="6" viewBox="0 0 11 6"><path d="M.6 .6 L5.500 5.400 L10.400 .6" fill="none" stroke="#706e6b" stroke-width="1.300"/></svg>
<div class="t" id="t32" style="top:765.0px;font-size:13px;line-height:15px;color:#181818;left:54px;letter-spacing:0.077px;">Work<span class="hl">flow</span> Actions</div>
<div class="t" id="t33" style="top:797.0px;font-size:13px;line-height:15px;color:#181818;left:72px;letter-spacing:-0.137px;">Email Alerts</div>
<div class="t" id="t34" style="top:828.0px;font-size:13px;line-height:15px;color:#181818;left:72px;letter-spacing:-0.171px;">Field Updates</div>
<div class="t" id="t35" style="top:860.0px;font-size:13px;line-height:15px;color:#181818;left:72px;letter-spacing:-0.086px;">Outbound Messages</div>
<div class="t" id="t36" style="top:891.0px;font-size:13px;line-height:15px;color:#181818;left:72px;letter-spacing:-0.158px;">Send Actions</div>
<div class="t" id="t37" style="top:924.0px;font-size:12.5px;line-height:14px;color:#181818;left:72px;letter-spacing:-0.391px;">Tasks</div>
<div class="t" id="t38" style="top:954.0px;font-size:13px;line-height:15px;color:#181818;left:56px;letter-spacing:-0.114px;">Work<span class="hl">flow</span> Rules</div>
<svg style="left:16.9px;top:991.5px;" width="11" height="6" viewBox="0 0 11 6"><path d="M.6 .6 L5.500 5.400 L10.400 .6" fill="none" stroke="#706e6b" stroke-width="1.300"/></svg>
<div class="t" id="t39" style="top:986.0px;font-size:13px;line-height:15px;color:#181818;left:38px;letter-spacing:0.135px;">Identity</div>
<div class="t" id="t40" style="top:1017.0px;font-size:13px;line-height:15px;color:#181818;left:56px;letter-spacing:-0.216px;">Login <span class="hl">Flow</span>s</div>
<div class="abs" style="left:1904px;top:256px;width:16px;height:18px;background:rgba(255,255,255,.5);border-radius:0 0 0 5px"></div>
<div class="abs" style="left:1909px;top:247px;width:11px;height:9px;background:#9cc3cf"></div>
<div class="abs" style="left:1909px;top:256px;width:11px;height:15.5px;background:#2a6f9f"></div>
<svg style="left:1913px;top:256.5px;" width="7" height="10" viewBox="0 0 7 10"><path d="M7 0 V10 L0 5Z" fill="#a4cadf"/></svg>
<div class="abs card" style="left:262px;top:271px;width:1645px;height:88px"></div>
<div class="abs" style="left:279px;top:288px;width:50px;height:50px;background:#1b6e9c;border-radius:4px"></div>
<svg style="left:290px;top:299px;" width="28" height="28" viewBox="0 0 24 24"><g transform="translate(12 12)"><rect x="-3.300" y="-12" width="6.600" height="7" rx="2" fill="#fff" transform="rotate(0)"/><rect x="-3.300" y="-12" width="6.600" height="7" rx="2" fill="#fff" transform="rotate(60)"/><rect x="-3.300" y="-12" width="6.600" height="7" rx="2" fill="#fff" transform="rotate(120)"/><rect x="-3.300" y="-12" width="6.600" height="7" rx="2" fill="#fff" transform="rotate(180)"/><rect x="-3.300" y="-12" width="6.600" height="7" rx="2" fill="#fff" transform="rotate(240)"/><rect x="-3.300" y="-12" width="6.600" height="7" rx="2" fill="#fff" transform="rotate(300)"/><circle r="8.600" fill="#fff"/><circle r="5.3" fill="#1b6e9c"/><circle r="3.9" fill="#fff"/></g></svg>
<div class="t" id="t41" style="top:293.0px;font-size:10.5px;line-height:12px;color:#2a6da3;left:337px;letter-spacing:-0.303px;">SETUP</div>
<div class="t" id="t42" style="top:312.0px;font-size:19.0px;line-height:21px;color:#181818;left:338px;font-weight:700;letter-spacing:-0.369px;">Flows</div>
<div class="btn" style="left:1643px;top:288px;width:154px;height:32px"></div>
<div class="btn" style="left:1801px;top:288px;width:90px;height:32px"></div>
<div class="t" id="t43" style="top:297.0px;font-size:13px;line-height:15px;color:#1a6ab8;left:1659.7px;letter-spacing:-0.155px;">Flow Trigger Explorer</div>
<div class="t" id="t44" style="top:297.0px;font-size:13px;line-height:15px;color:#1a6ab8;left:1818px;letter-spacing:-0.135px;">New Flow</div>
<div class="abs card" style="left:262px;top:372px;width:1645px;height:647px;border-radius:4px 4px 0 0;clip-path:inset(-6px -6px 0 -6px)"></div>
<div class="t" id="t45" style="top:389.0px;font-size:13px;line-height:15px;color:#181818;left:279px;letter-spacing:-0.017px;">Flow Definitions</div>
<div class="t" id="t46" style="top:408.0px;font-size:18.0px;line-height:20px;color:#181818;left:279px;font-weight:700;letter-spacing:-0.391px;">All Flows</div>
<svg style="left:366px;top:414px;" width="10" height="7" viewBox="0 0 10 7"><path d="M0 0 H10 L5 7Z" fill="#181818"/></svg>
<div class="btn" style="left:395px;top:409px;width:24px;height:24px"></div>
<svg style="left:402px;top:414.5px;" width="10" height="14" viewBox="0 0 10 14"><path d="M2 .5 H8 V2 H7 V6 L9.500 8.500 V9.500 H5.700 V13.500 H4.300 V9.500 H.5 V8.500 L3 6 V2 H2Z" fill="#2f5f9c"/></svg>
<div class="t" id="t47" style="top:451.0px;font-size:12px;line-height:14px;color:#181818;left:279px;letter-spacing:0.038px;">155 items • Sorted by Last Modified Date • Filtered by All flow definitions • Updated 25 minutes ago</div>
<div class="btn" style="left:1775px;top:434px;width:44px;height:32px"></div>
<div class="btn" style="left:1823px;top:434px;width:32px;height:32px"></div>
<div class="btn" style="left:1859px;top:434px;width:32px;height:32px"></div>
<svg style="left:1784.5px;top:445.5px;" width="13" height="13" viewBox="0 0 13 13"><g transform="translate(6.500 6.500)"><path d="M-1.700 -3.500 L0 -6.600 L1.700 -3.500Z" fill="#747474" stroke="#747474" stroke-width=".8" stroke-linejoin="round" transform="rotate(0)"/><path d="M-1.700 -3.500 L0 -6.600 L1.700 -3.500Z" fill="#747474" stroke="#747474" stroke-width=".8" stroke-linejoin="round" transform="rotate(60)"/><path d="M-1.700 -3.500 L0 -6.600 L1.700 -3.500Z" fill="#747474" stroke="#747474" stroke-width=".8" stroke-linejoin="round" transform="rotate(120)"/><path d="M-1.700 -3.500 L0 -6.600 L1.700 -3.500Z" fill="#747474" stroke="#747474" stroke-width=".8" stroke-linejoin="round" transform="rotate(180)"/><path d="M-1.700 -3.500 L0 -6.600 L1.700 -3.500Z" fill="#747474" stroke="#747474" stroke-width=".8" stroke-linejoin="round" transform="rotate(240)"/><path d="M-1.700 -3.500 L0 -6.600 L1.700 -3.500Z" fill="#747474" stroke="#747474" stroke-width=".8" stroke-linejoin="round" transform="rotate(300)"/><circle r="3.700" fill="none" stroke="#747474" stroke-width="1.700"/><circle r="1.100" fill="#747474"/></g></svg>
<svg style="left:1803px;top:450px;" width="6.5" height="4" viewBox="0 0 6.5 4"><path d="M0 0 H6.500 L3.250 4Z" fill="#747474"/></svg>
<svg style="left:1832.5px;top:444.5px;" width="13" height="13" viewBox="0 0 13 13"><path d="M11.300 7.800 A4.800 4.800 0 1 1 10.300 4.200" fill="none" stroke="#747474" stroke-width="1.600"/><path d="M12.200 .9 V5.500 H7.600" fill="none" stroke="#747474" stroke-width="1.600"/></svg>
<svg style="left:1869px;top:445px;" width="12.5" height="12" viewBox="0 0 12.5 12"><path d="M0 0 H12.500 L6.250 6.500Z" fill="#747474"/><rect x="5.400" y="5" width="1.700" height="7" fill="#747474"/></svg>
<div class="abs" style="left:263px;top:478px;width:1644px;height:541px;background:#fff"></div>
<div class="abs" style="left:263px;top:478px;width:1644px;height:34px;background:#f3f3f3;border-top:1px solid #c9c9c9;border-bottom:1px solid #c9c9c9"></div>
<div class="t" id="t48" style="top:489.0px;font-size:13px;line-height:15px;color:#3e3e3c;left:287px;font-weight:700;letter-spacing:-0.317px;">Flow Label</div>
<svg style="left:690px;top:493.5px;" width="12" height="7" viewBox="0 0 12 7"><path d="M.7 .7 L6 6 L11.300 .7" fill="none" stroke="#5c5c5c" stroke-width="1.400"/></svg>
<div class="t" id="t49" style="top:489.0px;font-size:13.0px;line-height:15px;color:#3e3e3c;left:718px;font-weight:700;letter-spacing:-0.424px;">Process Type</div>
<svg style="left:872px;top:493.5px;" width="12" height="7" viewBox="0 0 12 7"><path d="M.7 .7 L6 6 L11.300 .7" fill="none" stroke="#5c5c5c" stroke-width="1.400"/></svg>
<div class="t" id="t50" style="top:489.0px;font-size:13px;line-height:15px;color:#3e3e3c;left:900px;font-weight:700;letter-spacing:-0.011px;">Trigger</div>
<svg style="left:1070px;top:493.5px;" width="12" height="7" viewBox="0 0 12 7"><path d="M.7 .7 L6 6 L11.300 .7" fill="none" stroke="#5c5c5c" stroke-width="1.400"/></svg>
<div class="t" id="t51" style="top:489.0px;font-size:13px;line-height:15px;color:#3e3e3c;left:1098px;font-weight:700;letter-spacing:-0.172px;">Active</div>
<svg style="left:1155px;top:493.5px;" width="12" height="7" viewBox="0 0 12 7"><path d="M.7 .7 L6 6 L11.300 .7" fill="none" stroke="#5c5c5c" stroke-width="1.400"/></svg>
<div class="t" id="t52" style="top:489.0px;font-size:13px;line-height:15px;color:#3e3e3c;left:1183px;font-weight:700;letter-spacing:0.105px;">Templ...</div>
<svg style="left:1240px;top:493.5px;" width="12" height="7" viewBox="0 0 12 7"><path d="M.7 .7 L6 6 L11.300 .7" fill="none" stroke="#5c5c5c" stroke-width="1.400"/></svg>
<div class="t" id="t53" style="top:489.0px;font-size:13px;line-height:15px;color:#3e3e3c;left:1268px;font-weight:700;letter-spacing:-0.244px;">Package State</div>
<svg style="left:1388px;top:493.5px;" width="12" height="7" viewBox="0 0 12 7"><path d="M.7 .7 L6 6 L11.300 .7" fill="none" stroke="#5c5c5c" stroke-width="1.400"/></svg>
<div class="t" id="t54" style="top:489.0px;font-size:13px;line-height:15px;color:#3e3e3c;left:1417px;font-weight:700;letter-spacing:-0.180px;">Packa...</div>
<svg style="left:1473px;top:493.5px;" width="12" height="7" viewBox="0 0 12 7"><path d="M.7 .7 L6 6 L11.300 .7" fill="none" stroke="#5c5c5c" stroke-width="1.400"/></svg>
<div class="t" id="t55" style="top:489.0px;font-size:13px;line-height:15px;color:#3e3e3c;left:1502px;font-weight:700;letter-spacing:-0.095px;">Last Modified By</div>
<svg style="left:1647px;top:493.5px;" width="12" height="7" viewBox="0 0 12 7"><path d="M.7 .7 L6 6 L11.300 .7" fill="none" stroke="#5c5c5c" stroke-width="1.400"/></svg>
<div class="t" id="t56" style="top:489.0px;font-size:13px;line-height:15px;color:#3e3e3c;left:1676px;font-weight:700;letter-spacing:0.023px;">Last Modified Date</div>
<svg style="left:1820px;top:493.5px;" width="12" height="7" viewBox="0 0 12 7"><path d="M.7 .7 L6 6 L11.300 .7" fill="none" stroke="#5c5c5c" stroke-width="1.400"/></svg>
<div class="abs" style="left:709px;top:479px;width:1px;height:32px;background:#c9c9c9"></div>
<div class="abs" style="left:891px;top:479px;width:1px;height:32px;background:#c9c9c9"></div>
<div class="abs" style="left:1089px;top:479px;width:1px;height:32px;background:#c9c9c9"></div>
<div class="abs" style="left:1174px;top:479px;width:1px;height:32px;background:#c9c9c9"></div>
<div class="abs" style="left:1259px;top:479px;width:1px;height:32px;background:#c9c9c9"></div>
<div class="abs" style="left:1408px;top:479px;width:1px;height:32px;background:#c9c9c9"></div>
<div class="abs" style="left:1493px;top:479px;width:1px;height:32px;background:#c9c9c9"></div>
<div class="abs" style="left:1667px;top:479px;width:1px;height:32px;background:#c9c9c9"></div>
<div class="abs" style="left:1839px;top:479px;width:1px;height:32px;background:#c9c9c9"></div>
<svg style="left:1798px;top:489px;" width="8" height="10" viewBox="0 0 8 10"><path d="M4 0 V9 M.8 5.500 L4 9 L7.200 5.500" fill="none" stroke="#2a5b9c" stroke-width="1.500"/></svg>
<div class="abs" style="left:263px;top:512px;width:1644px;height:507px;overflow:hidden">
<div class="abs" style="left:0;top:30px;width:1629px;height:1px;background:#c9c9c9"></div>
<div class="abs" style="left:0;top:0;width:447px;height:30px;border:2px solid #0b4f94;background:#fff"></div>
<div class="t" id="t57" style="top:8.0px;font-size:13px;line-height:15px;color:#181818;left:24px;letter-spacing:-0.272px;"><span style="background:#d2e2f8;padding:3px 0 2px">Renewal Reminder Send Email Flow</span></div>
<div class="t" id="t58" style="top:8.0px;font-size:13px;line-height:15px;color:#181818;left:455px;letter-spacing:-0.034px;">Autolaunched Flow</div>
<div class="t" id="t59" style="top:8.0px;font-size:13px;line-height:15px;color:#181818;left:637px;letter-spacing:-0.277px;">Schedule</div>
<div class="cb" style="left:835px;top:8px"></div>
<svg style="left:838.5px;top:12.5px;" width="11" height="8" viewBox="0 0 11 8"><path d="M1 4 L4 7 L10 1.200" fill="none" stroke="#808080" stroke-width="2"/></svg>
<div class="cb" style="left:920px;top:8px"></div>
<div class="t" id="t60" style="top:8.0px;font-size:13px;line-height:15px;color:#181818;left:1005px;letter-spacing:-0.125px;">Unmanaged</div>
<div class="t" id="t61" style="top:8.0px;font-size:13px;line-height:15px;color:#181818;left:1239px;letter-spacing:0.090px;">Saiful Momentum</div>
<div class="t" id="t62" style="top:8.0px;font-size:13px;line-height:15px;color:#181818;left:1413px;letter-spacing:-0.141px;">2025-12-03, 3:11 a.m.</div>
<div class="rowbtn" style="left:1585px;top:6px"></div>
<svg style="left:1590.5px;top:14px;" width="9" height="5" viewBox="0 0 9 5"><path d="M0 0 H9 L4.500 5Z" fill="#5c5c5c"/></svg>
<div class="abs" style="left:0;top:61px;width:1629px;height:1px;background:#c9c9c9"></div>
<div class="t" id="t63" style="top:39.0px;font-size:13px;line-height:15px;color:#1f63a5;left:24px;letter-spacing:-0.238px;">Stage Transition Email Send Flow</div>
<div class="t" id="t64" style="top:39.0px;font-size:13px;line-height:15px;color:#181818;left:455px;letter-spacing:-0.034px;">Autolaunched Flow</div>
<div class="t" id="t65" style="top:39.0px;font-size:13px;line-height:15px;color:#181818;left:637px;letter-spacing:-0.255px;">Record—Run After Save</div>
<div class="cb" style="left:835px;top:39px"></div>
<svg style="left:838.5px;top:43.5px;" width="11" height="8" viewBox="0 0 11 8"><path d="M1 4 L4 7 L10 1.200" fill="none" stroke="#808080" stroke-width="2"/></svg>
<div class="cb" style="left:920px;top:39px"></div>
<div class="t" id="t66" style="top:39.0px;font-size:13px;line-height:15px;color:#181818;left:1005px;letter-spacing:-0.125px;">Unmanaged</div>
<div class="t" id="t67" style="top:39.0px;font-size:13px;line-height:15px;color:#181818;left:1239px;letter-spacing:0.090px;">Saiful Momentum</div>
<div class="t" id="t68" style="top:39.0px;font-size:13px;line-height:15px;color:#181818;left:1413px;letter-spacing:-0.187px;">2025-12-02, 6:37 a.m.</div>
<div class="rowbtn" style="left:1585px;top:37px"></div>
<svg style="left:1590.5px;top:45px;" width="9" height="5" viewBox="0 0 9 5"><path d="M0 0 H9 L4.500 5Z" fill="#5c5c5c"/></svg>
<div class="abs" style="left:0;top:91px;width:1629px;height:1px;background:#c9c9c9"></div>
<div class="t" id="t69" style="top:70.0px;font-size:13px;line-height:15px;color:#1f63a5;left:24px;letter-spacing:-0.302px;">Relied Request Email Send Flow</div>
<div class="t" id="t70" style="top:70.0px;font-size:13px;line-height:15px;color:#181818;left:455px;letter-spacing:-0.034px;">Autolaunched Flow</div>
<div class="t" id="t71" style="top:70.0px;font-size:13px;line-height:15px;color:#181818;left:637px;letter-spacing:-0.255px;">Record—Run After Save</div>
<div class="cb" style="left:835px;top:70px"></div>
<svg style="left:838.5px;top:74.5px;" width="11" height="8" viewBox="0 0 11 8"><path d="M1 4 L4 7 L10 1.200" fill="none" stroke="#808080" stroke-width="2"/></svg>
<div class="cb" style="left:920px;top:70px"></div>
<div class="t" id="t72" style="top:70.0px;font-size:13px;line-height:15px;color:#181818;left:1005px;letter-spacing:-0.125px;">Unmanaged</div>
<div class="t" id="t73" style="top:70.0px;font-size:13px;line-height:15px;color:#181818;left:1239px;letter-spacing:0.090px;">Saiful Momentum</div>
<div class="t" id="t74" style="top:70.0px;font-size:13px;line-height:15px;color:#181818;left:1413px;letter-spacing:-0.187px;">2025-12-02, 5:53 a.m.</div>
<div class="rowbtn" style="left:1585px;top:68px"></div>
<svg style="left:1590.5px;top:76px;" width="9" height="5" viewBox="0 0 9 5"><path d="M0 0 H9 L4.500 5Z" fill="#5c5c5c"/></svg>
<div class="abs" style="left:0;top:122px;width:1629px;height:1px;background:#c9c9c9"></div>
<div class="t" id="t75" style="top:100.0px;font-size:13px;line-height:15px;color:#1f63a5;left:24px;letter-spacing:0.003px;">profile update confirmation Email Send Flow</div>
<div class="t" id="t76" style="top:100.0px;font-size:13px;line-height:15px;color:#181818;left:455px;letter-spacing:-0.034px;">Autolaunched Flow</div>
<div class="t" id="t77" style="top:100.0px;font-size:13px;line-height:15px;color:#181818;left:637px;letter-spacing:-0.255px;">Record—Run After Save</div>
<div class="cb" style="left:835px;top:100px"></div>
<svg style="left:838.5px;top:104.5px;" width="11" height="8" viewBox="0 0 11 8"><path d="M1 4 L4 7 L10 1.200" fill="none" stroke="#808080" stroke-width="2"/></svg>
<div class="cb" style="left:920px;top:100px"></div>
<div class="t" id="t78" style="top:100.0px;font-size:13px;line-height:15px;color:#181818;left:1005px;letter-spacing:-0.125px;">Unmanaged</div>
<div class="t" id="t79" style="top:100.0px;font-size:13px;line-height:15px;color:#181818;left:1239px;letter-spacing:0.090px;">Saiful Momentum</div>
<div class="t" id="t80" style="top:100.0px;font-size:13px;line-height:15px;color:#181818;left:1413px;letter-spacing:-0.187px;">2025-12-02, 4:55 a.m.</div>
<div class="rowbtn" style="left:1585px;top:98px"></div>
<svg style="left:1590.5px;top:106px;" width="9" height="5" viewBox="0 0 9 5"><path d="M0 0 H9 L4.500 5Z" fill="#5c5c5c"/></svg>
<div class="abs" style="left:0;top:153px;width:1629px;height:1px;background:#c9c9c9"></div>
<div class="t" id="t81" style="top:131.0px;font-size:13px;line-height:15px;color:#1f63a5;left:24px;letter-spacing:-0.165px;">Membership Payment Email Send Flow</div>
<div class="t" id="t82" style="top:131.0px;font-size:13px;line-height:15px;color:#181818;left:455px;letter-spacing:-0.034px;">Autolaunched Flow</div>
<div class="t" id="t83" style="top:131.0px;font-size:13px;line-height:15px;color:#181818;left:637px;letter-spacing:-0.255px;">Record—Run After Save</div>
<div class="cb" style="left:835px;top:131px"></div>
<svg style="left:838.5px;top:135.5px;" width="11" height="8" viewBox="0 0 11 8"><path d="M1 4 L4 7 L10 1.200" fill="none" stroke="#808080" stroke-width="2"/></svg>
<div class="cb" style="left:920px;top:131px"></div>
<div class="t" id="t84" style="top:131.0px;font-size:13px;line-height:15px;color:#181818;left:1005px;letter-spacing:-0.125px;">Unmanaged</div>
<div class="t" id="t85" style="top:131.0px;font-size:13px;line-height:15px;color:#181818;left:1239px;letter-spacing:0.090px;">Saiful Momentum</div>
<div class="t" id="t86" style="top:131.0px;font-size:13px;line-height:15px;color:#181818;left:1413px;letter-spacing:-0.189px;">2025-12-02, 12:54 a.m.</div>
<div class="rowbtn" style="left:1585px;top:129px"></div>
<svg style="left:1590.5px;top:137px;" width="9" height="5" viewBox="0 0 9 5"><path d="M0 0 H9 L4.500 5Z" fill="#5c5c5c"/></svg>
<div class="abs" style="left:0;top:184px;width:1629px;height:1px;background:#c9c9c9"></div>
<div class="t" id="t87" style="top:163.0px;font-size:12.5px;line-height:14px;color:#1f63a5;left:24px;letter-spacing:-0.426px;">Test DPE</div>
<div class="t" id="t88" style="top:162.0px;font-size:13px;line-height:15px;color:#181818;left:455px;letter-spacing:-0.034px;">Autolaunched Flow</div>
<div class="t" id="t89" style="top:162.0px;font-size:13px;line-height:15px;color:#181818;left:637px;letter-spacing:-0.277px;">Schedule</div>
<div class="cb" style="left:835px;top:162px"></div>
<div class="cb" style="left:920px;top:162px"></div>
<div class="t" id="t90" style="top:162.0px;font-size:13px;line-height:15px;color:#181818;left:1005px;letter-spacing:-0.125px;">Unmanaged</div>
<div class="t" id="t91" style="top:162.0px;font-size:13px;line-height:15px;color:#181818;left:1239px;letter-spacing:0.200px;">Momentum Worldwide</div>
<div class="t" id="t92" style="top:162.0px;font-size:13px;line-height:15px;color:#181818;left:1413px;letter-spacing:-0.141px;">2025-11-10, 6:52 a.m.</div>
<div class="rowbtn" style="left:1585px;top:160px"></div>
<svg style="left:1590.5px;top:168px;" width="9" height="5" viewBox="0 0 9 5"><path d="M0 0 H9 L4.500 5Z" fill="#5c5c5c"/></svg>
<div class="abs" style="left:0;top:214px;width:1629px;height:1px;background:#c9c9c9"></div>
<div class="t" id="t93" style="top:193.0px;font-size:13px;line-height:15px;color:#1f63a5;left:24px;letter-spacing:-0.155px;">Eco Relief Approval</div>
<div class="t" id="t94" style="top:193.0px;font-size:13px;line-height:15px;color:#181818;left:455px;letter-spacing:-0.034px;">Autolaunched Flow</div>
<div class="t" id="t95" style="top:193.0px;font-size:13px;line-height:15px;color:#181818;left:637px;letter-spacing:-0.255px;">Record—Run After Save</div>
<div class="cb" style="left:835px;top:193px"></div>
<svg style="left:838.5px;top:197.5px;" width="11" height="8" viewBox="0 0 11 8"><path d="M1 4 L4 7 L10 1.200" fill="none" stroke="#808080" stroke-width="2"/></svg>
<div class="cb" style="left:920px;top:193px"></div>
<div class="t" id="t96" style="top:193.0px;font-size:13px;line-height:15px;color:#181818;left:1005px;letter-spacing:-0.125px;">Unmanaged</div>
<div class="t" id="t97" style="top:193.0px;font-size:13px;line-height:15px;color:#181818;left:1239px;letter-spacing:0.090px;">Saiful Momentum</div>
<div class="t" id="t98" style="top:193.0px;font-size:13px;line-height:15px;color:#181818;left:1413px;letter-spacing:-0.141px;">2025-11-05, 5:18 a.m.</div>
<div class="rowbtn" style="left:1585px;top:191px"></div>
<svg style="left:1590.5px;top:199px;" width="9" height="5" viewBox="0 0 9 5"><path d="M0 0 H9 L4.500 5Z" fill="#5c5c5c"/></svg>
<div class="abs" style="left:0;top:245px;width:1629px;height:1px;background:#c9c9c9"></div>
<div class="t" id="t99" style="top:223.0px;font-size:13px;line-height:15px;color:#1f63a5;left:24px;letter-spacing:-0.168px;">Deceased Membership Status Flow</div>
<div class="t" id="t100" style="top:223.0px;font-size:13px;line-height:15px;color:#181818;left:455px;letter-spacing:-0.034px;">Autolaunched Flow</div>
<div class="t" id="t101" style="top:223.0px;font-size:13px;line-height:15px;color:#181818;left:637px;letter-spacing:-0.255px;">Record—Run After Save</div>
<div class="cb" style="left:835px;top:223px"></div>
<svg style="left:838.5px;top:227.5px;" width="11" height="8" viewBox="0 0 11 8"><path d="M1 4 L4 7 L10 1.200" fill="none" stroke="#808080" stroke-width="2"/></svg>
<div class="cb" style="left:920px;top:223px"></div>
<div class="t" id="t102" style="top:223.0px;font-size:13px;line-height:15px;color:#181818;left:1005px;letter-spacing:-0.125px;">Unmanaged</div>
<div class="t" id="t103" style="top:223.0px;font-size:13px;line-height:15px;color:#181818;left:1239px;letter-spacing:0.200px;">Momentum Worldwide</div>
<div class="t" id="t104" style="top:223.0px;font-size:13px;line-height:15px;color:#181818;left:1413px;letter-spacing:-0.187px;">2025-10-29, 7:14 a.m.</div>
<div class="rowbtn" style="left:1585px;top:221px"></div>
<svg style="left:1590.5px;top:229px;" width="9" height="5" viewBox="0 0 9 5"><path d="M0 0 H9 L4.500 5Z" fill="#5c5c5c"/></svg>
<div class="abs" style="left:0;top:276px;width:1629px;height:1px;background:#c9c9c9"></div>
<div class="t" id="t105" style="top:254.0px;font-size:13px;line-height:15px;color:#1f63a5;left:24px;letter-spacing:-0.002px;">Update Account on Profile Update Request Approval</div>
<div class="t" id="t106" style="top:254.0px;font-size:13px;line-height:15px;color:#181818;left:455px;letter-spacing:-0.034px;">Autolaunched Flow</div>
<div class="t" id="t107" style="top:254.0px;font-size:13px;line-height:15px;color:#181818;left:637px;letter-spacing:-0.255px;">Record—Run After Save</div>
<div class="cb" style="left:835px;top:254px"></div>
<svg style="left:838.5px;top:258.5px;" width="11" height="8" viewBox="0 0 11 8"><path d="M1 4 L4 7 L10 1.200" fill="none" stroke="#808080" stroke-width="2"/></svg>
<div class="cb" style="left:920px;top:254px"></div>
<div class="t" id="t108" style="top:254.0px;font-size:13px;line-height:15px;color:#181818;left:1005px;letter-spacing:-0.125px;">Unmanaged</div>
<div class="t" id="t109" style="top:254.0px;font-size:13px;line-height:15px;color:#181818;left:1239px;letter-spacing:0.200px;">Momentum Worldwide</div>
<div class="t" id="t110" style="top:254.0px;font-size:13px;line-height:15px;color:#181818;left:1413px;letter-spacing:-0.187px;">2025-10-28, 2:57 a.m.</div>
<div class="rowbtn" style="left:1585px;top:252px"></div>
<svg style="left:1590.5px;top:260px;" width="9" height="5" viewBox="0 0 9 5"><path d="M0 0 H9 L4.500 5Z" fill="#5c5c5c"/></svg>
<div class="abs" style="left:0;top:307px;width:1629px;height:1px;background:#c9c9c9"></div>
<div class="t" id="t111" style="top:285.0px;font-size:13px;line-height:15px;color:#1f63a5;left:24px;letter-spacing:-0.099px;">Enforce Single Active Hijri Year Setting</div>
<div class="t" id="t112" style="top:285.0px;font-size:13px;line-height:15px;color:#181818;left:455px;letter-spacing:-0.034px;">Autolaunched Flow</div>
<div class="t" id="t113" style="top:285.0px;font-size:13.0px;line-height:15px;color:#181818;left:637px;letter-spacing:-0.360px;">Record—Run Before Save</div>
<div class="cb" style="left:835px;top:285px"></div>
<svg style="left:838.5px;top:289.5px;" width="11" height="8" viewBox="0 0 11 8"><path d="M1 4 L4 7 L10 1.200" fill="none" stroke="#808080" stroke-width="2"/></svg>
<div class="cb" style="left:920px;top:285px"></div>
<div class="t" id="t114" style="top:285.0px;font-size:13px;line-height:15px;color:#181818;left:1005px;letter-spacing:-0.125px;">Unmanaged</div>
<div class="t" id="t115" style="top:285.0px;font-size:13px;line-height:15px;color:#181818;left:1239px;letter-spacing:0.200px;">Momentum Worldwide</div>
<div class="t" id="t116" style="top:285.0px;font-size:13px;line-height:15px;color:#181818;left:1413px;letter-spacing:-0.187px;">2025-10-15, 9:52 a.m.</div>
<div class="rowbtn" style="left:1585px;top:283px"></div>
<svg style="left:1590.5px;top:291px;" width="9" height="5" viewBox="0 0 9 5"><path d="M0 0 H9 L4.500 5Z" fill="#5c5c5c"/></svg>
<div class="abs" style="left:0;top:337px;width:1629px;height:1px;background:#c9c9c9"></div>
<div class="t" id="t117" style="top:316.0px;font-size:13px;line-height:15px;color:#1f63a5;left:24px;letter-spacing:-0.128px;">Membership Payment Status</div>
<div class="t" id="t118" style="top:316.0px;font-size:13px;line-height:15px;color:#181818;left:455px;letter-spacing:-0.034px;">Autolaunched Flow</div>
<div class="t" id="t119" style="top:316.0px;font-size:13px;line-height:15px;color:#181818;left:637px;letter-spacing:-0.255px;">Record—Run After Save</div>
<div class="cb" style="left:835px;top:316px"></div>
<svg style="left:838.5px;top:320.5px;" width="11" height="8" viewBox="0 0 11 8"><path d="M1 4 L4 7 L10 1.200" fill="none" stroke="#808080" stroke-width="2"/></svg>
<div class="cb" style="left:920px;top:316px"></div>
<div class="t" id="t120" style="top:316.0px;font-size:13px;line-height:15px;color:#181818;left:1005px;letter-spacing:-0.125px;">Unmanaged</div>
<div class="t" id="t121" style="top:316.0px;font-size:13px;line-height:15px;color:#181818;left:1239px;letter-spacing:0.200px;">Momentum Worldwide</div>
<div class="t" id="t122" style="top:316.0px;font-size:13px;line-height:15px;color:#181818;left:1413px;letter-spacing:-0.187px;">2025-10-14, 6:29 a.m.</div>
<div class="rowbtn" style="left:1585px;top:314px"></div>
<svg style="left:1590.5px;top:322px;" width="9" height="5" viewBox="0 0 9 5"><path d="M0 0 H9 L4.500 5Z" fill="#5c5c5c"/></svg>
<div class="abs" style="left:0;top:368px;width:1629px;height:1px;background:#c9c9c9"></div>
<div class="t" id="t123" style="top:346.0px;font-size:13px;line-height:15px;color:#1f63a5;left:24px;letter-spacing:-0.080px;">Membership Fee Delete (subflow)</div>
<div class="t" id="t124" style="top:346.0px;font-size:13px;line-height:15px;color:#181818;left:455px;letter-spacing:-0.034px;">Autolaunched Flow</div>
<div class="cb" style="left:835px;top:346px"></div>
<svg style="left:838.5px;top:350.5px;" width="11" height="8" viewBox="0 0 11 8"><path d="M1 4 L4 7 L10 1.200" fill="none" stroke="#808080" stroke-width="2"/></svg>
<div class="cb" style="left:920px;top:346px"></div>
<div class="t" id="t125" style="top:346.0px;font-size:13px;line-height:15px;color:#181818;left:1005px;letter-spacing:-0.125px;">Unmanaged</div>
<div class="t" id="t126" style="top:346.0px;font-size:13px;line-height:15px;color:#181818;left:1239px;letter-spacing:0.200px;">Momentum Worldwide</div>
<div class="t" id="t127" style="top:346.0px;font-size:13px;line-height:15px;color:#181818;left:1413px;letter-spacing:-0.187px;">2025-09-30, 2:45 a.m.</div>
<div class="rowbtn" style="left:1585px;top:344px"></div>
<svg style="left:1590.5px;top:352px;" width="9" height="5" viewBox="0 0 9 5"><path d="M0 0 H9 L4.500 5Z" fill="#5c5c5c"/></svg>
<div class="abs" style="left:0;top:399px;width:1629px;height:1px;background:#c9c9c9"></div>
<div class="t" id="t128" style="top:377.0px;font-size:13px;line-height:15px;color:#1f63a5;left:24px;letter-spacing:0.001px;">Donation Form</div>
<div class="t" id="t129" style="top:377.0px;font-size:13.0px;line-height:15px;color:#181818;left:455px;letter-spacing:-0.386px;">Screen Flow</div>
<div class="cb" style="left:835px;top:377px"></div>
<svg style="left:838.5px;top:381.5px;" width="11" height="8" viewBox="0 0 11 8"><path d="M1 4 L4 7 L10 1.200" fill="none" stroke="#808080" stroke-width="2"/></svg>
<div class="cb" style="left:920px;top:377px"></div>
<div class="t" id="t130" style="top:377.0px;font-size:13px;line-height:15px;color:#181818;left:1005px;letter-spacing:-0.125px;">Unmanaged</div>
<div class="t" id="t131" style="top:377.0px;font-size:13px;line-height:15px;color:#181818;left:1239px;letter-spacing:0.200px;">Momentum Worldwide</div>
<div class="t" id="t132" style="top:377.0px;font-size:13px;line-height:15px;color:#181818;left:1413px;letter-spacing:-0.141px;">2025-09-10, 4:11 a.m.</div>
<div class="rowbtn" style="left:1585px;top:375px"></div>
<svg style="left:1590.5px;top:383px;" width="9" height="5" viewBox="0 0 9 5"><path d="M0 0 H9 L4.500 5Z" fill="#5c5c5c"/></svg>
<div class="abs" style="left:0;top:430px;width:1629px;height:1px;background:#c9c9c9"></div>
<div class="t" id="t133" style="top:408.0px;font-size:13px;line-height:15px;color:#1f63a5;left:24px;letter-spacing:-0.137px;">Membership Fee is paid (Two)</div>
<div class="t" id="t134" style="top:408.0px;font-size:13px;line-height:15px;color:#181818;left:455px;letter-spacing:-0.034px;">Autolaunched Flow</div>
<div class="t" id="t135" style="top:408.0px;font-size:13px;line-height:15px;color:#181818;left:637px;letter-spacing:-0.255px;">Record—Run After Save</div>
<div class="cb" style="left:835px;top:408px"></div>
<div class="cb" style="left:920px;top:408px"></div>
<div class="t" id="t136" style="top:408.0px;font-size:13px;line-height:15px;color:#181818;left:1005px;letter-spacing:-0.125px;">Unmanaged</div>
<div class="t" id="t137" style="top:408.0px;font-size:13px;line-height:15px;color:#181818;left:1239px;letter-spacing:0.200px;">Momentum Worldwide</div>
<div class="t" id="t138" style="top:408.0px;font-size:13px;line-height:15px;color:#181818;left:1413px;letter-spacing:-0.187px;">2025-08-27, 3:48 a.m.</div>
<div class="rowbtn" style="left:1585px;top:406px"></div>
<svg style="left:1590.5px;top:414px;" width="9" height="5" viewBox="0 0 9 5"><path d="M0 0 H9 L4.500 5Z" fill="#5c5c5c"/></svg>
<div class="abs" style="left:0;top:460px;width:1629px;height:1px;background:#c9c9c9"></div>
<div class="t" id="t139" style="top:439.0px;font-size:13px;line-height:15px;color:#1f63a5;left:24px;letter-spacing:-0.159px;">Membership Fee is paid (Self)</div>
<div class="t" id="t140" style="top:439.0px;font-size:13px;line-height:15px;color:#181818;left:455px;letter-spacing:-0.034px;">Autolaunched Flow</div>
<div class="t" id="t141" style="top:439.0px;font-size:13px;line-height:15px;color:#181818;left:637px;letter-spacing:-0.255px;">Record—Run After Save</div>
<div class="cb" style="left:835px;top:439px"></div>
<svg style="left:838.5px;top:443.5px;" width="11" height="8" viewBox="0 0 11 8"><path d="M1 4 L4 7 L10 1.200" fill="none" stroke="#808080" stroke-width="2"/></svg>
<div class="cb" style="left:920px;top:439px"></div>
<div class="t" id="t142" style="top:439.0px;font-size:13px;line-height:15px;color:#181818;left:1005px;letter-spacing:-0.125px;">Unmanaged</div>
<div class="t" id="t143" style="top:439.0px;font-size:13px;line-height:15px;color:#181818;left:1239px;letter-spacing:0.200px;">Momentum Worldwide</div>
<div class="t" id="t144" style="top:439.0px;font-size:13px;line-height:15px;color:#181818;left:1413px;letter-spacing:-0.187px;">2025-08-26, 7:07 a.m.</div>
<div class="rowbtn" style="left:1585px;top:437px"></div>
<svg style="left:1590.5px;top:445px;" width="9" height="5" viewBox="0 0 9 5"><path d="M0 0 H9 L4.500 5Z" fill="#5c5c5c"/></svg>
<div class="abs" style="left:0;top:491px;width:1629px;height:1px;background:#c9c9c9"></div>
<div class="t" id="t145" style="top:469.0px;font-size:13px;line-height:15px;color:#1f63a5;left:24px;letter-spacing:-0.084px;">Membership Fee is paid (Other)</div>
<div class="t" id="t146" style="top:469.0px;font-size:13px;line-height:15px;color:#181818;left:455px;letter-spacing:-0.034px;">Autolaunched Flow</div>
<div class="t" id="t147" style="top:469.0px;font-size:13px;line-height:15px;color:#181818;left:637px;letter-spacing:-0.255px;">Record—Run After Save</div>
<div class="cb" style="left:835px;top:469px"></div>
<svg style="left:838.5px;top:473.5px;" width="11" height="8" viewBox="0 0 11 8"><path d="M1 4 L4 7 L10 1.200" fill="none" stroke="#808080" stroke-width="2"/></svg>
<div class="cb" style="left:920px;top:469px"></div>
<div class="t" id="t148" style="top:469.0px;font-size:13px;line-height:15px;color:#181818;left:1005px;letter-spacing:-0.125px;">Unmanaged</div>
<div class="t" id="t149" style="top:469.0px;font-size:13px;line-height:15px;color:#181818;left:1239px;letter-spacing:0.200px;">Momentum Worldwide</div>
<div class="t" id="t150" style="top:469.0px;font-size:13px;line-height:15px;color:#181818;left:1413px;letter-spacing:-0.187px;">2025-08-26, 7:05 a.m.</div>
<div class="rowbtn" style="left:1585px;top:467px"></div>
<svg style="left:1590.5px;top:475px;" width="9" height="5" viewBox="0 0 9 5"><path d="M0 0 H9 L4.500 5Z" fill="#5c5c5c"/></svg>
<div class="abs" style="left:0;top:522px;width:1629px;height:1px;background:#c9c9c9"></div>
<div class="t" id="t151" style="top:500.0px;font-size:13px;line-height:15px;color:#1f63a5;left:24px;letter-spacing:-0.070px;">Membership Gift Transaction Delete</div>
<div class="t" id="t152" style="top:500.0px;font-size:13px;line-height:15px;color:#181818;left:455px;letter-spacing:-0.034px;">Autolaunched Flow</div>
<div class="t" id="t153" style="top:500.0px;font-size:13px;line-height:15px;color:#181818;left:637px;letter-spacing:-0.202px;">Record—Run Before Delete</div>
<div class="cb" style="left:835px;top:500px"></div>
<svg style="left:838.5px;top:504.5px;" width="11" height="8" viewBox="0 0 11 8"><path d="M1 4 L4 7 L10 1.200" fill="none" stroke="#808080" stroke-width="2"/></svg>
<div class="cb" style="left:920px;top:500px"></div>
<div class="t" id="t154" style="top:500.0px;font-size:13px;line-height:15px;color:#181818;left:1005px;letter-spacing:-0.125px;">Unmanaged</div>
<div class="t" id="t155" style="top:500.0px;font-size:13px;line-height:15px;color:#181818;left:1239px;letter-spacing:0.200px;">Momentum Worldwide</div>
<div class="t" id="t156" style="top:500.0px;font-size:13px;line-height:15px;color:#181818;left:1413px;letter-spacing:-0.187px;">2025-08-26, 6:06 a.m.</div>
<div class="rowbtn" style="left:1585px;top:498px"></div>
<svg style="left:1590.5px;top:506px;" width="9" height="5" viewBox="0 0 9 5"><path d="M0 0 H9 L4.500 5Z" fill="#5c5c5c"/></svg>
</div>
<svg style="left:1895px;top:517px;" width="9" height="6" viewBox="0 0 9 6"><path d="M0 6 H9 L4.500 0Z" fill="#8b8b8b"/></svg>
<div class="abs" style="left:1895.5px;top:530px;width:8px;height:50px;background:#8b8b8b;border-radius:4px"></div>
<svg style="left:1895px;top:1009px;" width="9" height="6" viewBox="0 0 9 6"><path d="M0 0 H9 L4.500 6Z" fill="#8b8b8b"/></svg>
<div class="abs" id="taskbar"></div>
<svg style="left:21px;top:1044px" width="23" height="22" viewBox="0 0 23 22"><defs><radialGradient id="sun" cx=".4" cy=".35" r=".7"><stop offset="0" stop-color="#ffc83d"/><stop offset="1" stop-color="#f28a1c"/></radialGradient></defs><circle cx="9.500" cy="10.500" r="9.500" fill="url(#sun)"/><path d="M10 18.500 a3.500 3.500 0 0 1 .5-7 a4.500 4.500 0 0 1 8.500-.8 a3.900 3.900 0 0 1 .5 7.800Z" fill="#c9d6f2"/><path d="M10 18.500 a3 3 0 0 1 0-4 h10 a3 3 0 0 1 0 4Z" fill="#8fa8e0"/></svg>
<div class="t" style="left:51px;top:1042.0px;font-size:11.5px;line-height:12px;color:#fff;font-weight:400;letter-spacing:-0.2px">79°F</div>
<div class="t" style="left:50px;top:1057.0px;font-size:12px;line-height:14px;color:#d2d2d2;font-weight:400;letter-spacing:0.22px">Mostly sunny</div>
<svg style="left:485px;top:1044.7px" width="23" height="23" viewBox="0 0 23 23"><defs><linearGradient id="wl" x1="0" y1="0" x2="1" y2="1"><stop offset="0" stop-color="#6fd3ff"/><stop offset="1" stop-color="#0f8fe0"/></linearGradient></defs><rect width="11" height="11" fill="url(#wl)"/><rect x="12" width="11" height="11" fill="url(#wl)"/><rect y="12" width="11" height="11" fill="url(#wl)"/><rect x="12" y="12" width="11" height="11" fill="url(#wl)"/></svg>
<div class="abs" style="left:521px;top:1040px;width:220px;height:32px;background:linear-gradient(90deg,#2f3336,#3f4143 45%,#3d3f41);border:1px solid #4c4e50;border-radius:16px"></div>
<svg style="left:533px;top:1049px" width="15" height="15" viewBox="0 0 15 15"><circle cx="6" cy="6" r="5" fill="none" stroke="#d0d0d0" stroke-width="1.500"/><path d="M9.800 9.800 L14 14" stroke="#d0d0d0" stroke-width="1.700"/></svg>
<div class="t" style="left:558px;top:1046.0px;font-size:13px;line-height:20px;color:#d8d8d8;font-weight:400;letter-spacing:0.1px">Search</div>
<svg style="left:687px;top:1042.5px" width="50" height="26" viewBox="0 0 50 26"><defs><linearGradient id="tb" x1="0" y1="0" x2="0" y2="1"><stop offset="0" stop-color="#2a2d5e"/><stop offset=".45" stop-color="#6a5590"/><stop offset=".75" stop-color="#c98a5a"/><stop offset="1" stop-color="#f0a030"/></linearGradient><clipPath id="tbc"><path d="M8 0 H37 Q50 0 50 13 Q50 26 37 26 H8 Q0 22 0 13 Q0 4 8 0Z"/></clipPath></defs><g clip-path="url(#tbc)"><rect width="50" height="26" fill="url(#tb)"/><rect x="2" y="8" width="6" height="18" fill="#3c4290"/><rect x="9" y="3" width="5" height="23" fill="#5a4fa0"/><rect x="36" y="2" width="5" height="24" fill="#5a4fa0"/><rect x="42" y="7" width="7" height="19" fill="#3c4290"/><rect x="1" y="18" width="7" height="8" fill="#d98a3a"/><rect x="42" y="18" width="8" height="8" fill="#d98a3a"/><path d="M25 2 L36 25 H14Z" fill="#15796a"/><path d="M25 2 L31 13 H19Z" fill="#1f9a80"/><path d="M25 9 L33.500 19 H16.500Z" fill="#178a72" opacity=".8"/><circle cx="25" cy="2.800" r="2" fill="#fff3c0"/><circle cx="22" cy="12" r="1" fill="#ffd36b"/><circle cx="28" cy="16" r="1" fill="#5ad0ff"/><circle cx="20" cy="20" r="1" fill="#ffd36b"/><circle cx="30" cy="22" r="1" fill="#ff8a6b"/><circle cx="25" cy="19" r="1" fill="#ffd36b"/></g></svg>
<svg style="left:753px;top:1044px" width="25" height="23" viewBox="0 0 25 23"><rect x="6" y="0" width="18" height="16" rx="1.500" fill="#f2f2f2"/><rect x="0" y="6" width="18" height="16" rx="1.500" fill="#7a7a7a" stroke="#1f1f1f" stroke-width=".8"/></svg>
<svg style="left:796px;top:1044px" width="26" height="24" viewBox="0 0 26 24"><path d="M13 0 a11.500 11.500 0 1 1 -6 21.300 L1.500 23 L3 18 A11.500 11.500 0 0 1 13 0Z" fill="#7b83eb"/><circle cx="13" cy="11.500" r="8.500" fill="#5059c9"/><rect x="7.500" y="8" width="7.500" height="7" rx="1.500" fill="#fff"/><path d="M15.500 10.500 L19 8.500 V14.500 L15.500 12.500Z" fill="#fff"/></svg>
<svg style="left:840px;top:1044px" width="26" height="23" viewBox="0 0 26 23"><path d="M1.500 0 H9 L11.500 3 H24.500 Q26 3 26 4.500 V21 Q26 22.500 24.500 22.500 H1.500 Q0 22.500 0 21 V1.500 Q0 0 1.500 0Z" fill="#f5b921"/><path d="M0 6 H26 V21 Q26 22.500 24.500 22.500 H1.500 Q0 22.500 0 21Z" fill="#ffd75e"/><rect x="7" y="15" width="12" height="7.500" rx="1" fill="#1e88e5"/></svg>
<div class="abs" style="left:850px;top:1072px;width:6px;height:2.5px;background:#8a8a8a;border-radius:1.500px"></div>
<svg style="left:884px;top:1044px" width="25" height="25" viewBox="0 0 25 25"><defs><linearGradient id="eg" x1="0" y1="0" x2="1" y2="1"><stop offset="0" stop-color="#35c1f1"/><stop offset=".5" stop-color="#1a8fd6"/><stop offset="1" stop-color="#1b5fb0"/></linearGradient></defs><circle cx="12.500" cy="12.500" r="12.500" fill="url(#eg)"/><path d="M2 16 C2 8 9 5 14 6.500 C19 8 21 12 20.500 15 C18 15.500 14 15.500 11.500 14 C10.500 18 13 21.500 17 22.500 C10 25 2 22 2 16Z" fill="#0c59a4"/><path d="M1 11 C3 3 12 0 18 3 C23 5.500 25 10 24 14 C22 15 20 15 20 13 C20 9 16 7 12.500 7 C7 7 3 10 1 14Z" fill="#4fd67a" opacity=".85"/></svg>
<div class="abs" style="left:895px;top:1072px;width:6px;height:2.5px;background:#8a8a8a;border-radius:1.500px"></div>
<svg style="left:929px;top:1044px" width="24" height="25" viewBox="0 0 24 25"><defs><radialGradient id="ff" cx=".6" cy=".2" r=".9"><stop offset="0" stop-color="#ffde3b"/><stop offset=".45" stop-color="#ff8a16"/><stop offset="1" stop-color="#e31587"/></radialGradient></defs><path d="M12 2 C14 0 16 0 17 1 C17 3 19 4 21 7 C24 11 24 17 21 21 C18 25 8 26 3 21 C-1 17 0 10 3 6 C4 8 5 9 6 9 C7 6 9 3 12 2Z" fill="url(#ff)"/><circle cx="12" cy="14.500" r="6" fill="#7542e5"/><path d="M6 12 C8 9 12 9 14 11 C12 11 10 13 11 15 C8 16 6 14 6 12Z" fill="#ffb12e"/></svg>
<svg style="left:973px;top:1045px" width="24" height="24" viewBox="0 0 24 24"><circle cx="12" cy="12" r="12" fill="#db4437"/><path d="M12 12 L1.600 6 A12 12 0 0 0 7 22.900 Z" fill="#0f9d58"/><path d="M12 12 L7 22.900 A12 12 0 0 0 22.400 6 H12Z" fill="#ffcd40"/><path d="M12 12 L22.400 6 H12Z" fill="#db4437"/><circle cx="12" cy="12" r="5.500" fill="#fff"/><circle cx="12" cy="12" r="4.400" fill="#4285f4"/></svg>
<svg style="left:989px;top:1039px" width="13" height="13" viewBox="0 0 13 13"><circle cx="6.500" cy="6.500" r="6.500" fill="#e8e8e8"/><circle cx="6.500" cy="5" r="2.600" fill="#5a4636"/><path d="M2 11.500 C2.500 8 10.500 8 11 11.500Z" fill="#3a3a3a"/></svg>
<div class="abs" style="left:982px;top:1072px;width:6px;height:2.5px;background:#8a8a8a;border-radius:1.500px"></div>
<svg style="left:1017px;top:1045px" width="24" height="24" viewBox="0 0 24 24"><circle cx="12" cy="12" r="12" fill="#db4437"/><path d="M12 12 L1.600 6 A12 12 0 0 0 7 22.900 Z" fill="#0f9d58"/><path d="M12 12 L7 22.900 A12 12 0 0 0 22.400 6 H12Z" fill="#ffcd40"/><path d="M12 12 L22.400 6 H12Z" fill="#db4437"/><circle cx="12" cy="12" r="5.500" fill="#fff"/><circle cx="12" cy="12" r="4.400" fill="#4285f4"/></svg>
<svg style="left:1031px;top:1040px" width="12" height="12" viewBox="0 0 12 12"><rect x="1" y="1" width="10" height="10" rx="3" fill="#3b3b3b" transform="rotate(20 6 6)"/></svg>
<div class="abs" style="left:1053px;top:1036.5px;width:40px;height:40px;background:#2d2d2d;border:1px solid #3a3a3a;border-radius:5px"></div>
<svg style="left:1061px;top:1045px" width="24" height="24" viewBox="0 0 24 24"><circle cx="12" cy="12" r="12" fill="#db4437"/><path d="M12 12 L1.600 6 A12 12 0 0 0 7 22.900 Z" fill="#0f9d58"/><path d="M12 12 L7 22.900 A12 12 0 0 0 22.400 6 H12Z" fill="#ffcd40"/><path d="M12 12 L22.400 6 H12Z" fill="#db4437"/><circle cx="12" cy="12" r="5.500" fill="#fff"/><circle cx="12" cy="12" r="4.400" fill="#4285f4"/></svg>
<div class="abs" style="left:1074px;top:1040px;width:15px;height:15px;background:#c2185b;border-radius:7.500px"></div>
<div class="t" style="left:1078.5px;top:1040.5px;font-size:9px;line-height:14px;color:#fff;font-weight:400;letter-spacing:0px">S</div>
<div class="abs" style="left:1065px;top:1072px;width:17px;height:3px;background:#4cc2ff;border-radius:1.500px"></div>
<svg style="left:1105px;top:1047px" width="24" height="18" viewBox="0 0 24 18"><rect width="24" height="18" rx="1" fill="#cfe5f6"/><path d="M1 15 L3.500 10 L5 12 L7 3.500 L9 11 L11 9.500 L13 12 L15 8 L16.500 4.500 L18.500 11 L21 12.500 L23 14 V17 H1Z" fill="#62aee6" stroke="#eaf5fd" stroke-width=".9"/></svg>
<svg style="left:1149px;top:1046px" width="22" height="19" viewBox="0 0 22 19"><rect x=".4" y=".4" width="21.200" height="18.200" rx="1" fill="#050505" stroke="#8a8a8a" stroke-width=".8"/><rect x=".8" y=".8" width="20.400" height="2.600" fill="#3a3a3a"/><path d="M3 7.500 H7 M8.500 7.500 H10" stroke="#e0e0e0" stroke-width="1.500"/><path d="M11 9.500 H18" stroke="#e0e0e0" stroke-width="1.200"/></svg>
<svg style="left:1193px;top:1044px" width="25" height="26" viewBox="0 0 25 26"><path d="M12 1.500 C6 1.500 2 4.500 2 10 C2 13.500 3.500 16 5.500 17 L7.500 23 C9 25 11.500 24 11 21 V17.500 C13 18.500 15 18.500 16.500 17.500 L17 19.500 C18.500 21.500 21.500 20 21 17 C23.500 13 23.500 6.500 21 3.500 C19 1.500 15 1.500 12 1.500Z" fill="#4e7fb3" stroke="#dfe8f2" stroke-width="1.100"/><path d="M7 7 C7 12 8 15 11 17.500 M17 6 C17 11 16 14 14 16" fill="none" stroke="#dfe8f2" stroke-width=".9"/><circle cx="9" cy="8" r=".9" fill="#fff"/><circle cx="16" cy="8" r=".9" fill="#fff"/></svg>
<svg style="left:1237px;top:1044px" width="25" height="25" viewBox="0 0 25 25"><path d="M18 0 L25 3.500 V21.500 L18 25 L6 14 L2 17.500 L0 16 V9 L2 7.500 L6 11Z" fill="#1f9cf0"/><path d="M18 6.500 L10 12.500 L18 18.500Z" fill="#1f1f1f"/><path d="M18 0 L25 3.500 V21.500 L18 25Z" fill="#0065a9"/></svg>
<svg style="left:1281px;top:1044px" width="25" height="25" viewBox="0 0 25 25"><path d="M0 3 L17 0 L25 8 V20 L14 25 L0 22Z" fill="#21d789"/><path d="M12 14 L25 8 V20 L14 25Z" fill="#fcf84a"/><path d="M0 3 L8 1.500 V12 H0Z" fill="#07c3f2"/><rect x="4" y="4" width="16" height="16" fill="#000"/><path d="M6 17 H12" stroke="#fff" stroke-width="1.300"/></svg>
<div class="t" style="left:1286.5px;top:1047.0px;font-size:8px;line-height:12px;color:#fff;font-weight:700;letter-spacing:0px">PC</div>
<svg style="left:1325px;top:1044px" width="25" height="25" viewBox="0 0 25 25"><g transform="rotate(45 12.500 12.500)"><rect x="4" y="4" width="8.500" height="8.500" rx="1" fill="#f08585"/><rect x="12.500" y="4" width="8.500" height="8.500" rx="1" fill="#6aae4e"/><rect x="4" y="12.500" width="8.500" height="8.500" rx="1" fill="#78a6ee"/><rect x="12.500" y="12.500" width="8.500" height="8.500" rx="1" fill="#f3dc78"/></g><path d="M10.500 5.500 L12.500 12 V19 M16 9 L12.500 13" stroke="#2a2a2a" stroke-width="1.500" fill="none"/><circle cx="12.500" cy="19" r="1.400" fill="#2a2a2a"/><circle cx="16.500" cy="8.500" r="1.400" fill="#2a2a2a"/></svg>
<svg style="left:1372px;top:1044px" width="19" height="24" viewBox="0 0 19 24"><rect y="1.500" width="19" height="22.500" rx="1.500" fill="#35b8ea"/><rect x="0" y="21" width="19" height="3" rx="1" fill="#e8812d"/><rect x="0" y="20" width="19" height="1.200" fill="#f3f3f3"/><path d="M2.500 .5 V3 M5.300 .5 V3 M8.100 .5 V3 M10.900 .5 V3 M13.700 .5 V3 M16.500 .5 V3" stroke="#2a93c8" stroke-width="1.300"/><path d="M3 7 H16 M3 10.500 H16 M3 14 H16 M3 17.500 H16" stroke="#1a84c4" stroke-width="1.600"/></svg>
<div class="abs" style="left:1378px;top:1072px;width:6px;height:2.5px;background:#8a8a8a;border-radius:1.500px"></div>
<svg style="left:1413px;top:1044px" width="24" height="25" viewBox="0 0 24 25"><rect width="24" height="25" fill="#fff"/><rect x="6" y="4.500" width="12.500" height="8.500" rx="1" fill="#e8f3fb" stroke="#2f84cc" stroke-width="1.300"/><rect x="10.500" y="13.500" width="3.500" height="2" fill="#2f84cc"/><rect x="8" y="15.500" width="8.500" height="1.300" fill="#2f84cc"/><path d="M8.500 8.500 H11 M13 7.500 H16" stroke="#3aa655" stroke-width="1.300"/></svg>
<div class="t" style="left:1417px;top:1061.0px;font-size:4.5px;line-height:5px;color:#555;font-weight:400;letter-spacing:0px">TaskPro</div>
<div class="abs" style="left:1422px;top:1072px;width:6px;height:2.5px;background:#8a8a8a;border-radius:1.500px"></div>
<svg style="left:1671px;top:1052px" width="12" height="7" viewBox="0 0 12 7"><path d="M1 6 L6 1 L11 6" fill="none" stroke="#f0f0f0" stroke-width="1.500"/></svg>
<svg style="left:1700px;top:1050px" width="18" height="11" viewBox="0 0 18 11"><path d="M4 11 a3.500 3.500 0 0 1 .6-7 a5 5 0 0 1 9.500-.5 a4 4 0 0 1 .5 7.500Z" fill="#dcdcdc"/><path d="M9 11 a3 3 0 0 1 1-5.500 a4 4 0 0 1 4.500 5.500Z" fill="#a8a8a8"/></svg>
<svg style="left:1733px;top:1050px" width="16" height="11" viewBox="0 0 16 11"><rect x=".6" y=".6" width="14.800" height="9.800" rx="1.500" fill="none" stroke="#f0f0f0" stroke-width="1.200"/><path d="M3 3.500 H13 M3 5.500 H13 M4.500 8 H11.500" stroke="#f0f0f0" stroke-width="1" stroke-dasharray="1.200 1"/></svg>
<svg style="left:1765px;top:1049px" width="17" height="13" viewBox="0 0 17 13"><path d="M1 4.500 Q8.500 -2 16 4.500" fill="none" stroke="#f0f0f0" stroke-width="1.400"/><path d="M3.500 7.500 Q8.500 3 13.500 7.500" fill="none" stroke="#f0f0f0" stroke-width="1.400"/><path d="M6 10 Q8.500 7.800 11 10" fill="none" stroke="#f0f0f0" stroke-width="1.400"/><circle cx="8.500" cy="12" r="1.100" fill="#f0f0f0"/></svg>
<svg style="left:1789px;top:1049px" width="17" height="14" viewBox="0 0 17 14"><path d="M1 5 H3.500 L7.500 1.500 V12.500 L3.500 9 H1Z" fill="none" stroke="#f0f0f0" stroke-width="1.200" stroke-linejoin="round"/><path d="M10 4.500 Q11.500 7 10 9.500 M12.500 2.500 Q15 7 12.500 11.500 M15 .8 Q18.500 7 15 13.200" fill="none" stroke="#f0f0f0" stroke-width="1.100"/></svg>
<div class="t" style="right:43px;top:1041.0px;font-size:12px;line-height:14px;color:#fff;font-weight:400;letter-spacing:-0.1px">2:58 PM</div>
<div class="t" style="right:43px;top:1057.0px;font-size:12px;line-height:14px;color:#fff;font-weight:400;letter-spacing:0.1px">12/3/2025</div>
<svg style="left:1885.5px;top:1048.5px" width="13" height="15" viewBox="0 0 13 15"><path d="M6.500 1 C3.500 1 2.500 3.500 2.500 6 V9 L.8 11.500 H12.200 L10.500 9 V6 C10.500 3.500 9.500 1 6.500 1Z" fill="none" stroke="#f0f0f0" stroke-width="1.200"/><path d="M5 13 a1.500 1.500 0 0 0 3 0" fill="none" stroke="#f0f0f0" stroke-width="1.200"/></svg>
</div></body></html>
